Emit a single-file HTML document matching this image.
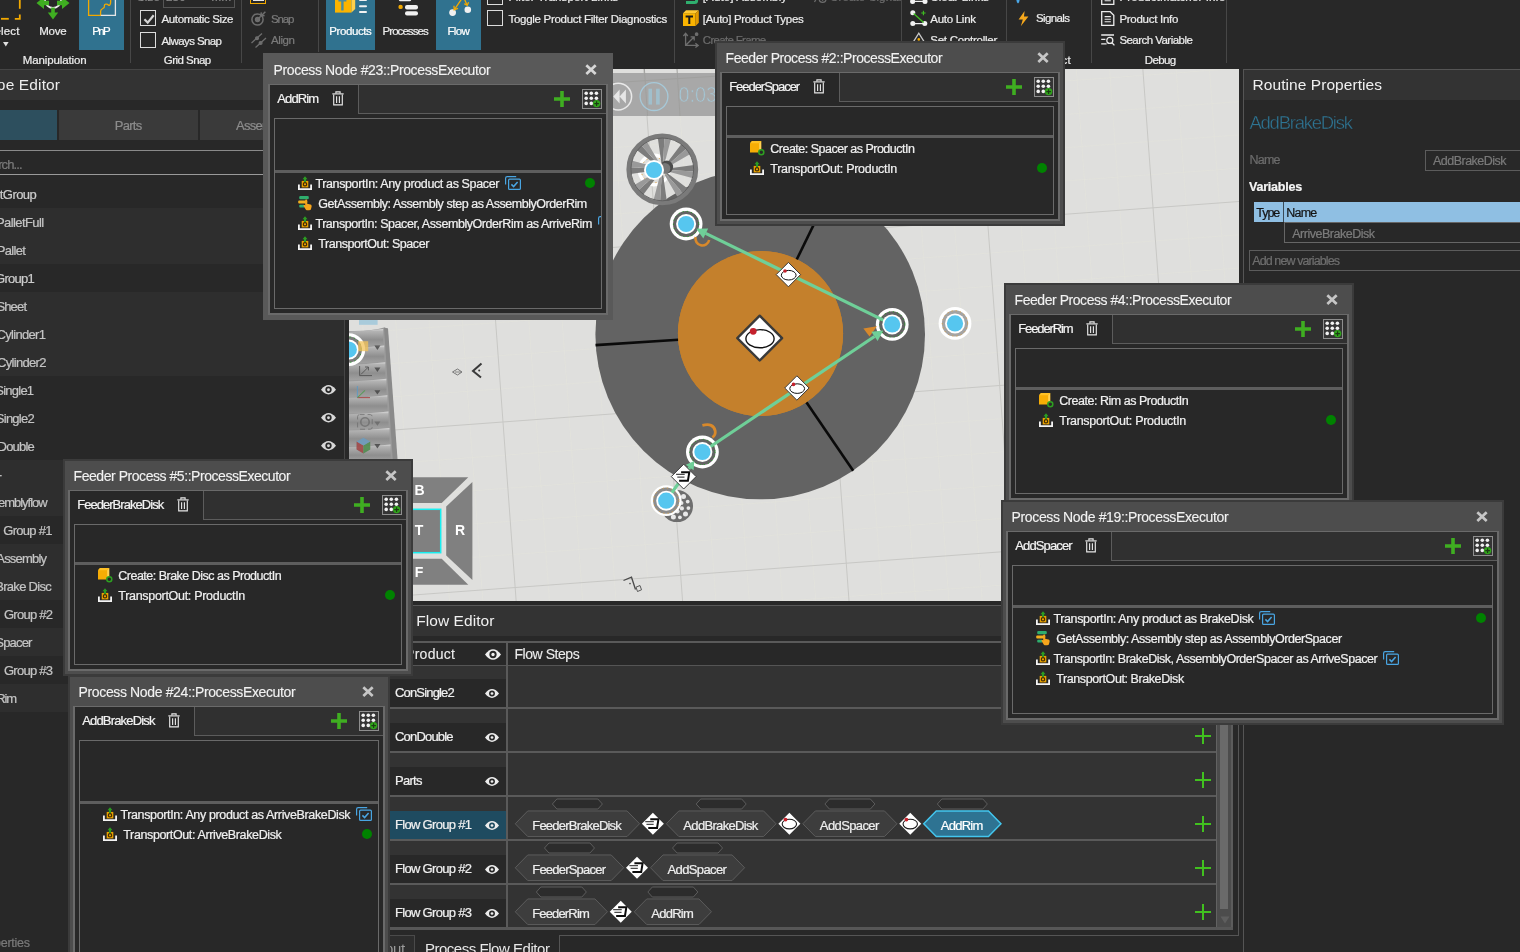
<!DOCTYPE html>
<html lang="en"><head><meta charset="utf-8"><title>Process Flow Editor</title>
<style>
html,body{margin:0;padding:0}
body{width:1520px;height:952px;overflow:hidden;background:#282828;position:relative;font-family:"Liberation Sans",sans-serif}
div,span.t,svg.i{position:absolute;box-sizing:border-box}
#app{left:0;top:0;width:1520px;height:952px;overflow:hidden;will-change:transform}
span.t{white-space:pre;line-height:1}
svg.i{overflow:visible}
.dlg{overflow:hidden}
</style></head>
<body>
<div id="app">
<!-- ribbon -->
<svg class="i" style="left:0px;top:0px;" width="22" height="21" viewBox="0 0 22 21"><g fill="none" stroke="#f2a900" stroke-width="1.8"><path d="M19.8 0V8.8"/><path d="M19.8 14.4V18.8H14.8"/><path d="M8.8 18.8H1"/></g></svg><span class="t" style="right:1500.46px;top:26px;font-size:11.5px;color:#ececec;letter-spacing:0.145px;-webkit-text-stroke:0.22px;">Select</span><svg class="i" style="left:2.5px;top:42px;" width="6" height="5" viewBox="0 0 6 5"><path d="M0 0H5.6L2.8 4.4z" fill="#e0e0e0"/></svg><svg class="i" style="left:36px;top:0px;" width="34" height="21" viewBox="0 0 34 21"><path d="M9 0A8 8 0 0 0 25 0" fill="none" stroke="#f0f0f0" stroke-width="1.8"/><g fill="#3fae21"><path d="M0.5 3L8 -3V0.8H13V5.2H8V9z"/><path d="M33.5 3L26 -3V0.8H21V5.2H26V9z"/><path d="M17 19.5L11.8 12.5H15.2V7.5H18.8V12.5H22.2z"/></g></svg><span class="t" style="left:39.25px;top:26px;font-size:11.5px;color:#ececec;letter-spacing:-0.207px;-webkit-text-stroke:0.22px;">Move</span><div style="left:79px;top:0px;width:45px;height:50px;background:#30728f;"></div><svg class="i" style="left:87px;top:0px;" width="30" height="17" viewBox="0 0 30 17"><g fill="none" stroke-width="1.3"><path d="M1.6 0V15.3H13.6V11.2C13.6 8 18 9 17.4 6.2 17 4 20 3.5 21.6 5.2 22.6 6 24 4.4 23.6 0" stroke="#f2a900"/><path d="M13.8 15.3H28.4V0" stroke="#e6e6e6"/></g></svg><span class="t" style="left:92.25px;top:26px;font-size:11.5px;color:#ffffff;letter-spacing:-1.619px;-webkit-text-stroke:0.22px;">PnP</span>
<span class="t" style="left:22.75px;top:55px;font-size:11.5px;color:#ececec;letter-spacing:-0.110px;-webkit-text-stroke:0.22px;">Manipulation</span><div style="left:130px;top:0px;width:1px;height:63px;background:#474747;"></div>
<div style="left:163px;top:-14px;width:72px;height:22px;border:1px solid #555555"></div><span class="t" style="left:137.00px;top:-8px;font-size:11.5px;color:#8a8a8a;letter-spacing:0.169px;-webkit-text-stroke:0.22px;">Size</span>
<span class="t" style="left:166.00px;top:-8px;font-size:11.5px;color:#8a8a8a;letter-spacing:0.217px;-webkit-text-stroke:0.22px;">250</span>
<span class="t" style="right:1288.57px;top:-8px;font-size:11.5px;color:#8a8a8a;letter-spacing:0.433px;-webkit-text-stroke:0.22px;">mm</span><div style="left:140px;top:10px;width:16px;height:16px;border:1px solid #dcdcdc"><svg class="i" style="left:1px;top:1px" width="14" height="14"><path d="M2.4 7.2l3.3 3.4 6-7.4" fill="none" stroke="#d4d4d4" stroke-width="2.2"/></svg></div>
<div style="left:140px;top:32px;width:16px;height:16px;border:1px solid #dcdcdc"></div><span class="t" style="left:161.50px;top:14px;font-size:11.5px;color:#ececec;letter-spacing:-0.362px;-webkit-text-stroke:0.22px;">Automatic Size</span>
<span class="t" style="left:161.50px;top:36px;font-size:11.5px;color:#ececec;letter-spacing:-0.598px;-webkit-text-stroke:0.22px;">Always Snap</span>
<span class="t" style="left:163.75px;top:55px;font-size:11.5px;color:#ececec;letter-spacing:-0.535px;-webkit-text-stroke:0.22px;">Grid Snap</span><div style="left:241px;top:0px;width:1px;height:63px;background:#474747;"></div>
<div style="left:250px;top:-12px;width:16px;height:16px;border:1.5px solid #f2a900"></div>
<div style="left:252.5px;top:-2px;width:11px;height:3px;background:#e8e8e8;"></div><svg class="i" style="left:251px;top:11px;" width="16" height="15" viewBox="0 0 16 15"><g fill="none" stroke="#6e6e6e" stroke-width="1.5"><circle cx="6.5" cy="8.5" r="5.6"/><circle cx="6.5" cy="8.5" r="2" fill="#6e6e6e"/><path d="M8 7L14.4 0.8M10.4 1.4L9.6 5.2 13.6 4.6"/></g></svg><span class="t" style="left:271.00px;top:14px;font-size:11.5px;color:#7a7a7a;letter-spacing:-1.120px;-webkit-text-stroke:0.22px;">Snap</span><svg class="i" style="left:251px;top:33px;" width="16" height="15" viewBox="0 0 16 15"><g fill="none" stroke="#6e6e6e" stroke-width="1.3"><path d="M0.5 10L11 0.5M4.5 14.5L15 5"/><circle cx="6" cy="5.2" r="1.4" fill="#6e6e6e"/><circle cx="9.6" cy="10" r="1.4" fill="#6e6e6e"/></g></svg><span class="t" style="left:271.00px;top:35px;font-size:11.5px;color:#7a7a7a;letter-spacing:-0.393px;-webkit-text-stroke:0.22px;">Align</span><div style="left:318px;top:0px;width:1px;height:52px;background:#474747;"></div>
<div style="left:326px;top:0px;width:49px;height:50px;background:#30728f;"></div><svg class="i" style="left:335px;top:0px;" width="34" height="14" viewBox="0 0 34 14"><path d="M0 0H16.5V12.6H0z" fill="#fbb400"/><path d="M16.5 0H20.2V9L16.5 12.6z" fill="#ffcf4a"/><path d="M3.4 0H11.4V1.6H8.6V10.6H6.2V1.6H3.4z" fill="#4a8ca0"/><g fill="#f2f2f2"><rect x="24" y="-1" width="8" height="2" rx="1"/><rect x="24" y="5.2" width="8" height="2" rx="1"/><rect x="24" y="11" width="8" height="2" rx="1"/></g></svg><span class="t" style="left:329.25px;top:26px;font-size:11.5px;color:#ffffff;letter-spacing:-0.412px;-webkit-text-stroke:0.22px;">Products</span><svg class="i" style="left:396px;top:0px;" width="24" height="17" viewBox="0 0 24 17"><g fill="#f0f0f0"><rect x="2.8" y="-2" width="12.4" height="3.2" rx="1.6"/><rect x="9" y="5" width="13" height="4.4" rx="2"/><rect x="9" y="11.2" width="13" height="4.4" rx="2"/></g><circle cx="4.6" cy="6.9" r="2.2" fill="#f2a900"/></svg><span class="t" style="left:382.50px;top:26px;font-size:11.5px;color:#ececec;letter-spacing:-0.936px;-webkit-text-stroke:0.22px;">Processes</span><div style="left:436px;top:0px;width:45px;height:50px;background:#30728f;"></div><svg class="i" style="left:447px;top:0px;" width="26" height="18" viewBox="0 0 26 18"><g fill="#f0f0f0"><circle cx="5.6" cy="12.6" r="3.4"/><circle cx="20.8" cy="9.8" r="3.3"/></g><g stroke="#f2a900" stroke-width="1.3" fill="none"><path d="M14.6 -1L7.4 9.6M7 5.8L7.2 9.8 11 8.4"/><path d="M17.4 -1L20 5M17.2 3.8L20.2 5.4 21.6 2.2"/></g></svg><span class="t" style="left:447.50px;top:26px;font-size:11.5px;color:#ffffff;letter-spacing:-0.694px;-webkit-text-stroke:0.22px;">Flow</span><div style="left:487px;top:-11px;width:16px;height:16px;border:1px solid #dcdcdc"></div>
<div style="left:487px;top:10px;width:16px;height:16px;border:1px solid #dcdcdc"></div><span class="t" style="left:508.50px;top:-8px;font-size:11.5px;color:#ececec;letter-spacing:0.116px;-webkit-text-stroke:0.22px;">Filter Transport Links</span>
<span class="t" style="left:508.50px;top:14px;font-size:11.5px;color:#ececec;letter-spacing:-0.292px;-webkit-text-stroke:0.22px;">Toggle Product Filter Diagnostics</span><div style="left:674px;top:0px;width:1px;height:63px;background:#474747;"></div><svg class="i" style="left:683px;top:-10px;" width="17" height="14" viewBox="0 0 17 14"><path d="M3 12.6H11.6Q13.6 12.6 13.6 10.6V2" fill="none" stroke="#2fae6e" stroke-width="3"/></svg><span class="t" style="left:702.75px;top:-8px;font-size:11.5px;color:#ececec;letter-spacing:0.133px;-webkit-text-stroke:0.22px;">[Auto] Assembly</span><svg class="i" style="left:683px;top:10px;" width="17" height="17" viewBox="0 0 17 17"><path d="M0 3.2H12.6V16H0z" fill="#fbb400"/><path d="M0 3.2L3 0.2H15.8L12.6 3.2z" fill="#ffc933"/><path d="M12.6 3.2L15.8 0.2V12.8L12.6 16z" fill="#e39a00"/><path d="M2.6 5.6H10V7.4H7.3V14H5.3V7.4H2.6z" fill="#1a1a1a"/></svg><span class="t" style="left:702.75px;top:14px;font-size:11.5px;color:#ececec;letter-spacing:-0.292px;-webkit-text-stroke:0.22px;">[Auto] Product Types</span><svg class="i" style="left:683px;top:32px;" width="17" height="17" viewBox="0 0 17 17"><g fill="none" stroke="#6e6e6e" stroke-width="1.3"><path d="M2.6 1.5V13.4H15M0.4 4L2.6 1.2 4.8 4M12.4 11.2L15.2 13.4 12.4 15.6M3 13L11 5M7.6 4.8H11.2V8.4"/><circle cx="13.6" cy="2.2" r="1.2" fill="#6e6e6e"/></g></svg><span class="t" style="left:702.75px;top:35px;font-size:11.5px;color:#6c6c6c;letter-spacing:-0.676px;-webkit-text-stroke:0.22px;">Create Frame</span><svg class="i" style="left:814px;top:-10px;" width="14" height="14" viewBox="0 0 14 14"><g fill="none" stroke="#6e6e6e" stroke-width="1.2"><path d="M0.5 12L6 2"/><circle cx="8.6" cy="9" r="3.4"/><path d="M8.6 7.2V10.8M6.8 9H10.4"/></g></svg><span class="t" style="left:830.00px;top:-8px;font-size:11.5px;color:#6c6c6c;letter-spacing:0.131px;-webkit-text-stroke:0.22px;">Create Signal</span><div style="left:901px;top:0px;width:1px;height:63px;background:#474747;"></div><svg class="i" style="left:910px;top:-10px;" width="18" height="14" viewBox="0 0 18 14"><g fill="#f2f2f2"><circle cx="2.6" cy="11.4" r="2.5"/><circle cx="15" cy="11.4" r="2.5"/></g><path d="M2.6 11.4H15" stroke="#f2f2f2" stroke-width="1.2"/><circle cx="12" cy="8.4" r="1" fill="#f2a900"/></svg><span class="t" style="left:930.25px;top:-8px;font-size:11.5px;color:#ececec;letter-spacing:0.130px;-webkit-text-stroke:0.22px;">Clear Links</span><svg class="i" style="left:910px;top:10px;" width="18" height="17" viewBox="0 0 18 17"><g fill="#f2f2f2"><circle cx="2.8" cy="2.8" r="2.5"/><circle cx="2.8" cy="13.6" r="2.5"/><circle cx="14.8" cy="13.6" r="2.5"/></g><path d="M2.8 13.6H14.8" stroke="#f2f2f2" stroke-width="1.2"/><path d="M3.6 3.6L13.6 12.6" stroke="#3fbf21" stroke-width="1.3"/><path d="M13.4 0.8V5.2M11.2 3H15.6" stroke="#3fbf21" stroke-width="1.1"/></svg><span class="t" style="left:930.25px;top:14px;font-size:11.5px;color:#ececec;letter-spacing:-0.275px;-webkit-text-stroke:0.22px;">Auto Link</span><svg class="i" style="left:910px;top:32px;" width="18" height="14" viewBox="0 0 18 14"><path d="M1 13.6L8.8 1.2 16.6 13.6" fill="none" stroke="#c8c8c8" stroke-width="1.3"/><circle cx="8.8" cy="7.4" r="1.3" fill="#f2a900"/><path d="M6.4 12.4Q8.8 8.4 11.2 12.4" fill="#e8e8e8"/></svg><span class="t" style="left:930.25px;top:35px;font-size:11.5px;color:#ececec;letter-spacing:-0.255px;-webkit-text-stroke:0.22px;">Set Controller</span><div style="left:1006px;top:0px;width:1px;height:63px;background:#474747;"></div><svg class="i" style="left:1015px;top:-4px;" width="6" height="8" viewBox="0 0 6 8"><path d="M3 0Q6 5 3 7.6 0 5 3 0z" fill="#4aa8e8"/></svg><svg class="i" style="left:1018px;top:10.5px;" width="11" height="15.5" viewBox="0 0 11 15.5"><path d="M6.6 0L0.6 8.6H4.8L2.8 15.2 10.4 5.6H6z" fill="#f6a81c"/></svg><span class="t" style="left:1036.00px;top:13px;font-size:11.5px;color:#ececec;letter-spacing:-0.620px;-webkit-text-stroke:0.22px;">Signals</span>
<span class="t" style="right:449.24px;top:55px;font-size:11.5px;color:#ececec;letter-spacing:0.161px;-webkit-text-stroke:0.22px;">Connect</span><div style="left:1091px;top:0px;width:1px;height:63px;background:#474747;"></div><svg class="i" style="left:1101px;top:-10.5px;" width="14" height="15" viewBox="0 0 14 15"><path d="M0.7 0.7H9.2L12.8 4.2V14.3H0.7z" fill="none" stroke="#ececec" stroke-width="1.3"/><path d="M3.6 5.6H9.8M3.6 8.2H9.8M3.6 10.8H9.8" stroke="#ececec" stroke-width="1.1"/></svg><span class="t" style="left:1119.40px;top:-8px;font-size:11.5px;color:#ececec;letter-spacing:0.130px;-webkit-text-stroke:0.22px;">ProductMatcher Info</span><svg class="i" style="left:1101px;top:10.5px;" width="14" height="15" viewBox="0 0 14 15"><path d="M0.7 0.7H9.2L12.8 4.2V14.3H0.7z" fill="none" stroke="#ececec" stroke-width="1.3"/><path d="M3.6 5.6H9.8M3.6 8.2H9.8M3.6 10.8H9.8" stroke="#ececec" stroke-width="1.1"/></svg><span class="t" style="left:1119.40px;top:14px;font-size:11.5px;color:#ececec;letter-spacing:-0.274px;-webkit-text-stroke:0.22px;">Product Info</span><svg class="i" style="left:1101px;top:34px;" width="14" height="12" viewBox="0 0 14 12"><g fill="none" stroke="#ececec" stroke-width="1.3"><path d="M0.2 1H13M0.2 5.4H4.4M0.2 9.8H5.6"/><circle cx="8.8" cy="6.4" r="3"/><path d="M11 8.8L13.4 11.4"/></g></svg><span class="t" style="left:1119.40px;top:35px;font-size:11.5px;color:#ececec;letter-spacing:-0.541px;-webkit-text-stroke:0.22px;">Search Variable</span>
<span class="t" style="left:1144.75px;top:55px;font-size:11.5px;color:#ececec;letter-spacing:-0.597px;-webkit-text-stroke:0.22px;">Debug</span><div style="left:1226px;top:0px;width:1px;height:63px;background:#474747;"></div>
<!-- left panel -->
<div style="left:0px;top:69px;width:349px;height:1px;background:#454545;"></div>
<div style="left:0px;top:70px;width:344px;height:30px;background:#333333;"></div><span class="t" style="right:1459.86px;top:77px;font-size:15.5px;color:#ededed;letter-spacing:0.136px;">Product Type Editor</span><div style="left:344px;top:70px;width:1px;height:882px;background:#454545;"></div>
<div style="left:0px;top:110px;width:57px;height:30px;background:#2d4f5e;"></div>
<div style="left:59px;top:110px;width:139px;height:30px;background:#3a3a3a;"></div><span class="t" style="left:114.75px;top:119px;font-size:13px;color:#8c8c8c;letter-spacing:-0.711px;-webkit-text-stroke:0.22px;">Parts</span><div style="left:200px;top:110px;width:139px;height:30px;background:#3a3a3a;"></div><span class="t" style="left:236.00px;top:119px;font-size:13px;color:#8c8c8c;letter-spacing:-0.704px;-webkit-text-stroke:0.22px;">Assemblies</span><div style="left:0px;top:150px;width:340px;height:1px;background:#8a8a8a;"></div>
<div style="left:0px;top:174px;width:340px;height:1px;background:#9a9a9a;"></div><span class="t" style="right:1498.42px;top:158px;font-size:13px;color:#7a7a7a;letter-spacing:-0.920px;-webkit-text-stroke:0.22px;">Search...</span>
<span class="t" style="right:1483.74px;top:188px;font-size:13px;color:#cdcdcd;letter-spacing:-0.541px;-webkit-text-stroke:0.22px;">DefaultGroup</span><div style="left:0px;top:208px;width:344px;height:28px;background:#2e2e2e;"></div><span class="t" style="right:1476.49px;top:216px;font-size:13px;color:#c4c4c4;letter-spacing:-0.594px;-webkit-text-stroke:0.22px;">PalletFull</span><div style="left:0px;top:236px;width:344px;height:28px;background:#2e2e2e;"></div><span class="t" style="right:1494.75px;top:244px;font-size:13px;color:#c4c4c4;letter-spacing:-0.650px;-webkit-text-stroke:0.22px;">Pallet</span>
<span class="t" style="right:1486.03px;top:272px;font-size:13px;color:#cdcdcd;letter-spacing:-0.735px;-webkit-text-stroke:0.22px;">ProductGroup1</span><div style="left:0px;top:292px;width:344px;height:28px;background:#2e2e2e;"></div><span class="t" style="right:1493.85px;top:300px;font-size:13px;color:#c4c4c4;letter-spacing:-0.849px;-webkit-text-stroke:0.22px;">Sheet</span><div style="left:0px;top:320px;width:344px;height:28px;background:#2e2e2e;"></div><span class="t" style="right:1474.79px;top:328px;font-size:13px;color:#c4c4c4;letter-spacing:-0.686px;-webkit-text-stroke:0.22px;">Cylinder1</span><div style="left:0px;top:348px;width:344px;height:28px;background:#2e2e2e;"></div><span class="t" style="right:1474.19px;top:356px;font-size:13px;color:#c4c4c4;letter-spacing:-0.686px;-webkit-text-stroke:0.22px;">Cylinder2</span>
<span class="t" style="right:1486.65px;top:384px;font-size:13px;color:#c4c4c4;letter-spacing:-0.747px;-webkit-text-stroke:0.22px;">ConSingle1</span>
<span class="t" style="right:1486.05px;top:412px;font-size:13px;color:#c4c4c4;letter-spacing:-0.747px;-webkit-text-stroke:0.22px;">ConSingle2</span>
<span class="t" style="right:1486.11px;top:440px;font-size:13px;color:#c4c4c4;letter-spacing:-0.813px;-webkit-text-stroke:0.22px;">ConDouble</span><div style="left:0px;top:460px;width:344px;height:28px;background:#2e2e2e;"></div><span class="t" style="right:1518.00px;top:468px;font-size:13px;color:#c4c4c4;-webkit-text-stroke:0.22px;">-</span><div style="left:0px;top:488px;width:344px;height:28px;background:#2e2e2e;"></div><span class="t" style="right:1473.42px;top:496px;font-size:13px;color:#c4c4c4;letter-spacing:-1.023px;-webkit-text-stroke:0.22px;">Assemblyflow</span>
<span class="t" style="right:1468.33px;top:524px;font-size:13px;color:#c4c4c4;letter-spacing:-0.735px;-webkit-text-stroke:0.22px;">Flow Group #1</span><div style="left:0px;top:544px;width:344px;height:28px;background:#2e2e2e;"></div><span class="t" style="right:1473.80px;top:552px;font-size:13px;color:#c4c4c4;letter-spacing:-0.805px;-webkit-text-stroke:0.22px;">Assembly</span><div style="left:0px;top:572px;width:344px;height:28px;background:#2e2e2e;"></div><span class="t" style="right:1468.90px;top:580px;font-size:13px;color:#c4c4c4;letter-spacing:-0.698px;-webkit-text-stroke:0.22px;">Brake Disc</span>
<span class="t" style="right:1467.73px;top:608px;font-size:13px;color:#c4c4c4;letter-spacing:-0.735px;-webkit-text-stroke:0.22px;">Flow Group #2</span><div style="left:0px;top:628px;width:344px;height:28px;background:#2e2e2e;"></div><span class="t" style="right:1488.42px;top:636px;font-size:13px;color:#c4c4c4;letter-spacing:-0.824px;-webkit-text-stroke:0.22px;">Spacer</span>
<span class="t" style="right:1467.73px;top:664px;font-size:13px;color:#c4c4c4;letter-spacing:-0.735px;-webkit-text-stroke:0.22px;">Flow Group #3</span><div style="left:0px;top:684px;width:344px;height:28px;background:#2e2e2e;"></div><span class="t" style="right:1504.16px;top:692px;font-size:13px;color:#c4c4c4;letter-spacing:-1.155px;-webkit-text-stroke:0.22px;">Rim</span><svg class="i" style="left:321.1px;top:385.25px;" width="15" height="9.5" viewBox="0 0 15 9.5"><path d="M0 4.75Q7.5 -4.5125 15 4.75Q7.5 14.0125 0 4.75z" fill="#d8d8d8"/><circle cx="7.5" cy="4.75" r="3.14" fill="#282828"/><circle cx="7.5" cy="4.75" r="1.43" fill="#d8d8d8"/></svg><svg class="i" style="left:321.1px;top:413.25px;" width="15" height="9.5" viewBox="0 0 15 9.5"><path d="M0 4.75Q7.5 -4.5125 15 4.75Q7.5 14.0125 0 4.75z" fill="#d8d8d8"/><circle cx="7.5" cy="4.75" r="3.14" fill="#282828"/><circle cx="7.5" cy="4.75" r="1.43" fill="#d8d8d8"/></svg><svg class="i" style="left:321.1px;top:441.25px;" width="15" height="9.5" viewBox="0 0 15 9.5"><path d="M0 4.75Q7.5 -4.5125 15 4.75Q7.5 14.0125 0 4.75z" fill="#d8d8d8"/><circle cx="7.5" cy="4.75" r="3.14" fill="#282828"/><circle cx="7.5" cy="4.75" r="1.43" fill="#d8d8d8"/></svg><span class="t" style="right:1490.25px;top:937px;font-size:12.5px;color:#7a7a7a;letter-spacing:-0.253px;-webkit-text-stroke:0.22px;">Properties</span>
<!-- 3d viewport -->
<svg class="i" style="left:349px;top:69px;overflow:hidden" width="890" height="532" viewBox="349 69 890 532"><rect x="349" y="69" width="890" height="532" fill="#dfdfdd"/><path d="M144.2 -383.9L265.8 1271.7M177.3 -386.3L298.9 1269.2M210.4 -388.8L332.0 1266.8M243.5 -391.2L365.1 1264.4M309.8 -396.0L431.3 1259.5M342.9 -398.5L464.5 1257.1M376.0 -400.9L497.6 1254.6M409.1 -403.3L530.7 1252.2M475.3 -408.2L596.9 1247.3M508.4 -410.6L630.0 1244.9M541.5 -413.1L663.1 1242.5M574.7 -415.5L696.2 1240.0M640.9 -420.4L762.5 1235.2M674.0 -422.8L795.6 1232.8M707.1 -425.2L828.7 1230.3M740.2 -427.7L861.8 1227.9M806.4 -432.5L928.0 1223.0M839.5 -434.9L961.1 1220.6M872.7 -437.4L994.2 1218.2M905.8 -439.8L1027.3 1215.7M972.0 -444.7L1093.6 1210.9M1005.1 -447.1L1126.7 1208.4M1038.2 -449.5L1159.8 1206.0M1071.3 -452.0L1192.9 1203.6M1137.5 -456.8L1259.1 1198.7M1170.7 -459.3L1292.2 1196.3M1203.8 -461.7L1325.3 1193.8M1236.9 -464.1L1358.4 1191.4M1303.1 -469.0L1424.7 1186.6M1336.2 -471.4L1457.8 1184.1M1369.3 -473.9L1490.9 1181.7M1402.4 -476.3L1524.0 1179.3M1468.6 -481.1L1590.2 1174.4M1501.8 -483.6L1623.3 1172.0M1534.9 -486.0L1656.4 1169.5M1568.0 -488.4L1689.6 1167.1M1634.2 -493.3L1755.8 1162.2M1667.3 -495.7L1788.9 1159.8M1700.4 -498.2L1822.0 1157.4M1733.5 -500.6L1855.1 1154.9M-358.8 19.2L1793.4 -138.8M-356.4 52.3L1795.8 -105.7M-353.9 85.5L1798.3 -72.6M-351.5 118.6L1800.7 -39.5M-346.7 184.8L1805.6 26.7M-344.2 217.9L1808.0 59.9M-341.8 251.0L1810.4 93.0M-339.4 284.1L1812.8 126.1M-334.5 350.3L1817.7 192.3M-332.1 383.5L1820.1 225.4M-329.6 416.6L1822.6 258.5M-327.2 449.7L1825.0 291.6M-322.3 515.9L1829.9 357.9M-319.9 549.0L1832.3 391.0M-317.5 582.1L1834.7 424.1M-315.0 615.2L1837.2 457.2M-310.2 681.5L1842.0 523.4M-307.8 714.6L1844.5 556.5M-305.3 747.7L1846.9 589.6M-302.9 780.8L1849.3 622.7M-298.0 847.0L1854.2 689.0M-295.6 880.1L1856.6 722.1M-293.2 913.2L1859.0 755.2M-290.7 946.3L1861.5 788.3" stroke="#e2e2dc" stroke-width="0.8" fill="none"/><path d="M111.1 -381.5L232.7 1274.1M276.7 -393.6L398.2 1261.9M442.2 -405.8L563.8 1249.8M607.8 -417.9L729.3 1237.6M773.3 -430.1L894.9 1225.5M938.9 -442.2L1060.5 1213.3M1104.4 -454.4L1226.0 1201.1M1270.0 -466.6L1391.6 1189.0M1435.5 -478.7L1557.1 1176.8M1601.1 -490.9L1722.7 1164.7M-361.2 -13.9L1791.0 -171.9M-349.1 151.7L1803.1 -6.4M-336.9 317.2L1815.3 159.2M-324.8 482.8L1827.4 324.7M-312.6 648.3L1839.6 490.3M-300.5 813.9L1851.7 655.8" stroke="#c8c8c5" stroke-width="1" fill="none"/><rect x="480" y="73" width="560" height="43" fill="#a8a8a8"/><path d="M613 82.7L716 76.2M644.4 69L647.6 116M677 69L680 116" stroke="#a0a09e" stroke-width="1" fill="none"/><circle cx="618.2" cy="96.6" r="13.4" fill="none" stroke="#e9e9e9" stroke-width="1.5"/><path d="M613.3 96.6L619.6 89.6V103.4zM619.6 96.6L625.9 89.6V103.4z" fill="#e6e6e6"/><circle cx="654" cy="96.6" r="13.9" fill="none" stroke="#a6c9d9" stroke-width="1.3"/><rect x="648.5" y="88.7" width="3.5" height="15.9" fill="#a0bfcc"/><rect x="656.1" y="88.7" width="3.6" height="15.9" fill="#a0bfcc"/><text x="678.4" y="102" font-family="Liberation Sans, sans-serif" font-size="22.4" fill="#a3c8d8" stroke="#a8a8a8" stroke-width="0.7" textLength="38.6" lengthAdjust="spacingAndGlyphs">0:03</text><circle cx="760.2" cy="334.5" r="164.8" fill="#636363"/><circle cx="760.5" cy="333.5" r="82.6" fill="#c4802c"/><line x1="678.4" y1="339.8" x2="595.5" y2="345.1" stroke="#0a0a0a" stroke-width="2.6"/><line x1="806.4" y1="402.2" x2="853.2" y2="470.8" stroke="#0a0a0a" stroke-width="2.6"/><line x1="796.1" y1="260.8" x2="832.5" y2="186.2" stroke="#0a0a0a" stroke-width="2.6"/><circle cx="760.5" cy="333.5" r="82.6" fill="#c4802c"/><circle cx="654" cy="170" r="16.4" fill="#ffffff"/><circle cx="654" cy="170" r="13.1" fill="#dfdfdd"/><circle cx="654" cy="170" r="12.7" fill="none" stroke="#e0a040" stroke-width="0.9" stroke-dasharray="1.2 3.1"/><path d="M668.2 168.5L694.0 164.9L694.2 171.6L668.3 170.1zM667.2 172.9L687.9 188.7L683.3 193.6L666.0 174.1zM663.2 175.3L666.8 201.1L660.1 201.3L661.6 175.4zM658.8 174.3L643.0 195.0L638.1 190.4L657.6 173.1zM656.4 170.3L630.6 173.9L630.4 167.2L656.3 168.7zM657.4 165.9L636.7 150.1L641.3 145.2L658.6 164.7zM661.4 163.5L657.8 137.7L664.5 137.5L663.0 163.4zM665.8 164.5L681.6 143.8L686.5 148.4L667.0 165.7z" fill="#7c7c7c"/><path d="M668.3 170.1L694.2 171.6L693.1 178.2L667.9 171.6zM666.0 174.1L683.3 193.6L677.8 197.4L664.7 174.9zM661.6 175.4L660.1 201.3L653.5 200.2L660.1 175.0zM657.6 173.1L638.1 190.4L634.3 184.9L656.8 171.8zM656.3 168.7L630.4 167.2L631.5 160.6L656.7 167.2zM658.6 164.7L641.3 145.2L646.8 141.4L659.9 163.9zM663.0 163.4L664.5 137.5L671.1 138.6L664.5 163.8zM667.0 165.7L686.5 148.4L690.3 153.9L667.8 167.0z" fill="#999999"/><circle cx="662.3" cy="169.4" r="33.7" fill="none" stroke="#7a7a7a" stroke-width="4.4"/><circle cx="662.3" cy="169.4" r="31.4" fill="none" stroke="#5c5c5c" stroke-width="0.9"/><circle cx="666.6999999999999" cy="167.0" r="6.4" fill="#4c4c4c"/><circle cx="664.9" cy="168.4" r="5.4" fill="#777777"/><circle cx="654" cy="170" r="10.0" fill="#ffffff"/><circle cx="654" cy="170" r="8.1" fill="#56c6ef"/><circle cx="677" cy="506.1" r="16" fill="#6e6e6e"/><circle cx="688.4" cy="508.1" r="1.9" fill="#e9e9e9"/><circle cx="685.5" cy="514.0" r="2.5" fill="#e9e9e9"/><circle cx="679.9" cy="517.3" r="1.9" fill="#e9e9e9"/><circle cx="673.4" cy="517.1" r="2.5" fill="#e9e9e9"/><circle cx="668.0" cy="513.4" r="1.9" fill="#e9e9e9"/><circle cx="665.5" cy="507.4" r="2.5" fill="#e9e9e9"/><circle cx="666.6" cy="501.0" r="1.9" fill="#e9e9e9"/><circle cx="671.0" cy="496.2" r="2.5" fill="#e9e9e9"/><circle cx="677.3" cy="494.5" r="1.9" fill="#e9e9e9"/><circle cx="683.5" cy="496.5" r="2.5" fill="#e9e9e9"/><circle cx="687.7" cy="501.6" r="1.9" fill="#e9e9e9"/><circle cx="681.9" cy="508.4" r="2.1" fill="#e9e9e9"/><circle cx="677.5" cy="511.5" r="2.1" fill="#e9e9e9"/><circle cx="672.6" cy="509.2" r="2.1" fill="#e9e9e9"/><circle cx="672.1" cy="503.8" r="2.1" fill="#e9e9e9"/><circle cx="676.5" cy="500.7" r="2.1" fill="#e9e9e9"/><circle cx="681.4" cy="503.0" r="2.1" fill="#e9e9e9"/><circle cx="686.1" cy="224" r="16.4" fill="#ffffff"/><circle cx="686.1" cy="224" r="13.1" fill="#636363"/><circle cx="686.1" cy="224" r="12.7" fill="none" stroke="#1fa31f" stroke-width="0.9" stroke-dasharray="1.2 3.1"/><circle cx="892.2" cy="324.4" r="16.4" fill="#ffffff"/><circle cx="892.2" cy="324.4" r="13.1" fill="#636363"/><circle cx="892.2" cy="324.4" r="12.7" fill="none" stroke="#1fa31f" stroke-width="0.9" stroke-dasharray="1.2 3.1"/><circle cx="702.4" cy="452" r="16.4" fill="#ffffff"/><circle cx="702.4" cy="452" r="13.1" fill="#636363"/><circle cx="702.4" cy="452" r="12.7" fill="none" stroke="#1fa31f" stroke-width="0.9" stroke-dasharray="1.2 3.1"/><circle cx="955" cy="323.4" r="16.4" fill="#ffffff"/><circle cx="955" cy="323.4" r="13.1" fill="#a4a4a4"/><circle cx="955" cy="323.4" r="12.7" fill="none" stroke="#e0a040" stroke-width="0.9" stroke-dasharray="1.2 3.1"/><circle cx="666.2" cy="500.7" r="15.4" fill="#ffffff"/><circle cx="666.2" cy="500.7" r="13.1" fill="#8c8c8c"/><circle cx="666.2" cy="500.7" r="12.7" fill="none" stroke="#e0a040" stroke-width="0.9" stroke-dasharray="1.2 3.1"/><path d="M695.6 237A6.8 6.8 0 1 0 709.2 240" fill="none" stroke="#d8892b" stroke-width="2.5"/><path d="M702.4 425.4Q713.4 422.6 715.2 431Q715.8 435.2 712.4 437.4" fill="none" stroke="#d8892b" stroke-width="2.8"/><path d="M863.4 328.4L877 326.2 869.5 336.4z" fill="#d8892b"/><line x1="892.0" y1="324.4" x2="705.7" y2="233.4" stroke="#6fcf98" stroke-width="3.2"/><polygon points="696.3,228.8 708.2,228.4 703.3,238.4" fill="#6fcf98"/><line x1="702.4" y1="452.0" x2="874.5" y2="336.5" stroke="#6fcf98" stroke-width="3.2"/><polygon points="883.2,330.6 877.6,341.1 871.4,331.8" fill="#6fcf98"/><line x1="666.2" y1="500.7" x2="689.7" y2="467.5" stroke="#6fcf98" stroke-width="3.2"/><polygon points="694.3,461.0 693.6,470.3 685.8,464.8" fill="#6fcf98"/><circle cx="686.1" cy="224" r="10.0" fill="#ffffff"/><circle cx="686.1" cy="224" r="8.1" fill="#56c6ef"/><circle cx="892.2" cy="324.4" r="10.0" fill="#ffffff"/><circle cx="892.2" cy="324.4" r="8.1" fill="#56c6ef"/><circle cx="702.4" cy="452" r="10.0" fill="#ffffff"/><circle cx="702.4" cy="452" r="8.1" fill="#56c6ef"/><circle cx="955" cy="323.4" r="10.0" fill="#ffffff"/><circle cx="955" cy="323.4" r="8.1" fill="#56c6ef"/><circle cx="666.2" cy="500.7" r="10.0" fill="#ffffff"/><circle cx="666.2" cy="500.7" r="8.1" fill="#56c6ef"/><polygon points="776.1999999999999,274.6 788.4,262.40000000000003 800.6,274.6 788.4,286.8" fill="#ffffff" stroke="#3a3a3a" stroke-width="1.0" stroke-linejoin="round"/><ellipse cx="788.6999999999999" cy="275.20000000000005" rx="7.4" ry="4.8" fill="none" stroke="#111" stroke-width="1.00"/><circle cx="785.0" cy="271.0" r="1.8" fill="#c4202c"/><polygon points="784.6999999999999,388 796.9,375.8 809.1,388 796.9,400.2" fill="#ffffff" stroke="#3a3a3a" stroke-width="1.0" stroke-linejoin="round"/><ellipse cx="797.1999999999999" cy="388.6" rx="7.4" ry="4.8" fill="none" stroke="#111" stroke-width="1.00"/><circle cx="793.5" cy="384.4" r="1.8" fill="#c4202c"/><polygon points="737.3000000000001,338.1 759.7,315.70000000000005 782.1,338.1 759.7,360.5" fill="#ffffff" stroke="#3a3a3a" stroke-width="2.4" stroke-linejoin="round"/><ellipse cx="760.0" cy="338.70000000000005" rx="14.1" ry="9.1" fill="none" stroke="#111" stroke-width="1.38"/><circle cx="753.2" cy="331.3" r="3.4" fill="#c4202c"/><polygon points="671.3000000000001,476.6 683.7,464.20000000000005 696.1,476.6 683.7,489.0" fill="#ffffff" stroke="#3a3a3a" stroke-width="1.0" stroke-linejoin="round"/><g fill="none" stroke="#0c0c0c" stroke-width="2"><path d="M681.1 472.20000000000005H689.3000000000001L687.9000000000001 480.8H679.1"/></g><path d="M676.1 474.40000000000003H684.7M677.3000000000001 477.20000000000005H684.5" stroke="#4a4a4a" stroke-width="1.2" fill="none"/><path d="M481.5 363.5L473 371 481 377.6" fill="none" stroke="#3a3a3a" stroke-width="2"/><circle cx="479.2" cy="370.6" r="1" fill="#3a3a3a"/><path d="M452.5 372L457.5 369 462 372 457.5 375z" fill="none" stroke="#6a6a6a" stroke-width="0.9"/><path d="M455 372H461" stroke="#6a6a6a" stroke-width="0.8"/><path d="M623.5 580.5L631.5 577.2 635.5 589.5" fill="none" stroke="#4a4a4a" stroke-width="1.3"/><path d="M636 587.2L640 585.5 641.5 589.8 637.5 591.5z" fill="none" stroke="#4a4a4a" stroke-width="0.9"/><circle cx="630" cy="583.6" r="0.8" fill="#4a4a4a"/><defs><linearGradient id="rol" x1="0" y1="0" x2="0" y2="1"><stop offset="0" stop-color="#dcdcdc"/><stop offset="0.12" stop-color="#b4b4b4"/><stop offset="0.6" stop-color="#8e8e8e"/><stop offset="1" stop-color="#a2a2a2"/></linearGradient></defs><path d="M349 331Q372 331.5 384 327.6L387.6 328.4 396.4 460H349z" fill="#9b9b9b"/><path d="M349 331.6Q366 331.2 383.2 329V344.2Q366 346.6 349 347z" fill="url(#rol)"/><path d="M349 348.20000000000005Q366 347.8 384.3 345.6V360.8Q366 363.20000000000005 349 363.6z" fill="url(#rol)"/><path d="M349 364.8Q366 364.4 385.3 362.2V377.4Q366 379.8 349 380.2z" fill="url(#rol)"/><path d="M349 381.40000000000003Q366 381.0 386.4 378.8V394.0Q366 396.40000000000003 349 396.8z" fill="url(#rol)"/><path d="M349 397.8Q366 397.4 387.4 395.2V410.4Q366 412.8 349 413.2z" fill="url(#rol)"/><path d="M349 414.20000000000005Q366 413.8 388.5 411.6V426.8Q366 429.20000000000005 349 429.6z" fill="url(#rol)"/><path d="M349 430.6Q366 430.2 389.5 428V443.2Q366 445.6 349 446z" fill="url(#rol)"/><path d="M349 447.0Q366 446.59999999999997 390.6 444.4V459.59999999999997Q366 462.0 349 462.4z" fill="url(#rol)"/><path d="M384 327.6L388 328.6 397.6 460H392.8z" fill="#8a8a8a"/><rect x="359" y="319.6" width="18.6" height="5.2" fill="#a9cbdb"/><circle cx="348.8" cy="349.6" r="16.4" fill="#ffffff"/><circle cx="348.8" cy="349.6" r="13.1" fill="#7c7c7c"/><circle cx="348.8" cy="349.6" r="12.7" fill="none" stroke="#1fa31f" stroke-width="0.9" stroke-dasharray="1.2 3.1"/><circle cx="348.8" cy="349.6" r="10.0" fill="#ffffff"/><circle cx="348.8" cy="349.6" r="8.1" fill="#56c6ef"/><g fill="#3c3c3c" opacity="0.75"><path d="M374.4 345.6H380.4L377.4 350z"/><path d="M374.4 367.6H380.4L377.4 372z"/><path d="M374.4 390.2H380.4L377.4 394.6z"/><path d="M374.4 421.4H380.4L377.4 425.8z" opacity="0.5"/><path d="M374.4 444H380.4L377.4 448.4z"/></g><path d="M358.2 341.2H368.2V351.2H358.2z" fill="#f3c257" opacity="0.75"/><g fill="none" stroke="#4a4a4a" stroke-width="1" opacity="0.8"><path d="M359.6 366V375.6H372M361 374.4L368 367.4M365 367H368.4V370.4"/></g><g fill="none" stroke-width="1.1" opacity="0.8"><path d="M357.4 386V397.6" stroke="#5a9ac8"/><path d="M357.4 397.6H370" stroke="#a83a3a"/><path d="M357.4 397.6L365 390.4" stroke="#4c9c4c"/></g><g fill="none" stroke="#6a6a6a" opacity="0.7"><rect x="357.6" y="414.6" width="14.6" height="14.6" rx="2" stroke-dasharray="5 3" stroke-width="1"/><circle cx="365" cy="422" r="4.2" stroke-width="1.6"/></g><g opacity="0.85"><path d="M356.6 441.6L363.4 437.8 370.2 441.6V449.6L363.4 453.6 356.6 449.6z" fill="#8a8a8a"/><path d="M356.6 441.6L363.4 445.4V453.6L356.6 449.6z" fill="#a04444"/><path d="M370.2 441.6L363.4 445.4V453.6L370.2 449.6z" fill="#4c8c4c"/><path d="M356.6 441.6L363.4 437.8 370.2 441.6 363.4 445.4z" fill="#6c9cc0"/></g><g fill="#808080"><path d="M400 477.2H468.3L441.7 503H400z"/><path d="M400 558.8H441.7L468.3 584.8H400z"/><path d="M446.2 506.6L472.4 482V580L446.2 555.4z"/></g><rect x="400" y="509.3" width="40.7" height="43.4" fill="#808080" stroke="#19eef0" stroke-width="1.5"/><text x="414.4" y="495.4" font-family="Liberation Sans, sans-serif" font-size="14" font-weight="700" fill="#ffffff">B</text><text x="414.8" y="535.4" font-family="Liberation Sans, sans-serif" font-size="14" font-weight="700" fill="#ffffff">T</text><text x="454.9" y="535.4" font-family="Liberation Sans, sans-serif" font-size="14" font-weight="700" fill="#ffffff">R</text><text x="414.8" y="577.3" font-family="Liberation Sans, sans-serif" font-size="14" font-weight="700" fill="#ffffff">F</text></svg>
<!-- flow editor -->
<div style="left:349px;top:601px;width:895px;height:351px;background:#282828;"></div>
<div style="left:390px;top:605px;width:849px;height:1px;background:#585858;"></div>
<div style="left:390px;top:606px;width:849px;height:30px;background:#333333;"></div><span class="t" style="left:416.25px;top:613px;font-size:15.5px;color:#f0f0f0;letter-spacing:0.057px;">Flow Editor</span><div style="left:1238px;top:605px;width:1px;height:331px;background:#555555;"></div>
<div style="left:390px;top:641px;width:843px;height:2px;background:#5a5a5a;"></div>
<div style="left:390px;top:643px;width:116px;height:22px;background:#282828;"></div>
<div style="left:508px;top:643px;width:725px;height:22px;background:#282828;"></div>
<div style="left:390px;top:665px;width:826px;height:1px;background:#555555;"></div><span class="t" style="right:1064.71px;top:647px;font-size:14px;color:#ececec;letter-spacing:0.292px;-webkit-text-stroke:0.12px;">Product</span><svg class="i" style="left:485.0px;top:648.5px;" width="16" height="11" viewBox="0 0 16 11"><path d="M0 5.5Q8.0 -5.225 16 5.5Q8.0 16.225 0 5.5z" fill="#f0f0f0"/><circle cx="8.0" cy="5.5" r="3.63" fill="#282828"/><circle cx="8.0" cy="5.5" r="1.65" fill="#f0f0f0"/></svg><span class="t" style="left:514.40px;top:647px;font-size:14px;color:#ececec;letter-spacing:-0.440px;-webkit-text-stroke:0.12px;">Flow Steps</span><div style="left:390px;top:666px;width:826px;height:264px;background:#333333;"></div>
<div style="left:506px;top:643px;width:2px;height:285px;background:#5a5a5a;"></div>
<div style="left:390px;top:679px;width:116px;height:28px;background:#282828;"></div>
<div style="left:390px;top:707px;width:826px;height:2px;background:#5a5a5a;"></div><span class="t" style="left:395.00px;top:686px;font-size:13px;color:#f0f0f0;letter-spacing:-0.830px;-webkit-text-stroke:0.22px;">ConSingle2</span><svg class="i" style="left:485.0px;top:688.5px;" width="14" height="9" viewBox="0 0 14 9"><path d="M0 4.5Q7.0 -4.2749999999999995 14 4.5Q7.0 13.274999999999999 0 4.5z" fill="#ececec"/><circle cx="7.0" cy="4.5" r="2.97" fill="#282828"/><circle cx="7.0" cy="4.5" r="1.35" fill="#ececec"/></svg><div style="left:390px;top:723px;width:116px;height:28px;background:#282828;"></div>
<div style="left:390px;top:751px;width:826px;height:2px;background:#5a5a5a;"></div><span class="t" style="left:395.00px;top:730px;font-size:13px;color:#f0f0f0;letter-spacing:-0.818px;-webkit-text-stroke:0.22px;">ConDouble</span><svg class="i" style="left:485.0px;top:732.5px;" width="14" height="9" viewBox="0 0 14 9"><path d="M0 4.5Q7.0 -4.2749999999999995 14 4.5Q7.0 13.274999999999999 0 4.5z" fill="#ececec"/><circle cx="7.0" cy="4.5" r="2.97" fill="#282828"/><circle cx="7.0" cy="4.5" r="1.35" fill="#ececec"/></svg><svg class="i" style="left:1195px;top:728px;" width="16" height="16" viewBox="0 0 16 16"><path d="M7 0h2v7h7v2H9v7H7V9H0V7h7z" fill="#41c11f"/></svg><div style="left:390px;top:767px;width:116px;height:28px;background:#282828;"></div>
<div style="left:390px;top:795px;width:826px;height:2px;background:#5a5a5a;"></div><span class="t" style="left:395.00px;top:774px;font-size:13px;color:#f0f0f0;letter-spacing:-0.711px;-webkit-text-stroke:0.22px;">Parts</span><svg class="i" style="left:485.0px;top:776.5px;" width="14" height="9" viewBox="0 0 14 9"><path d="M0 4.5Q7.0 -4.2749999999999995 14 4.5Q7.0 13.274999999999999 0 4.5z" fill="#ececec"/><circle cx="7.0" cy="4.5" r="2.97" fill="#282828"/><circle cx="7.0" cy="4.5" r="1.35" fill="#ececec"/></svg><svg class="i" style="left:1195px;top:772px;" width="16" height="16" viewBox="0 0 16 16"><path d="M7 0h2v7h7v2H9v7H7V9H0V7h7z" fill="#41c11f"/></svg><div style="left:390px;top:811px;width:116px;height:28px;background:#1f4b60;"></div>
<div style="left:390px;top:839px;width:826px;height:2px;background:#5a5a5a;"></div><span class="t" style="left:395.00px;top:818px;font-size:13px;color:#f0f0f0;letter-spacing:-0.689px;-webkit-text-stroke:0.22px;">Flow Group #1</span><svg class="i" style="left:485.0px;top:820.5px;" width="14" height="9" viewBox="0 0 14 9"><path d="M0 4.5Q7.0 -4.2749999999999995 14 4.5Q7.0 13.274999999999999 0 4.5z" fill="#ececec"/><circle cx="7.0" cy="4.5" r="2.97" fill="#1f4b60"/><circle cx="7.0" cy="4.5" r="1.35" fill="#ececec"/></svg><svg class="i" style="left:1195px;top:816px;" width="16" height="16" viewBox="0 0 16 16"><path d="M7 0h2v7h7v2H9v7H7V9H0V7h7z" fill="#41c11f"/></svg><div style="left:390px;top:855px;width:116px;height:28px;background:#282828;"></div>
<div style="left:390px;top:883px;width:826px;height:2px;background:#5a5a5a;"></div><span class="t" style="left:395.00px;top:862px;font-size:13px;color:#f0f0f0;letter-spacing:-0.689px;-webkit-text-stroke:0.22px;">Flow Group #2</span><svg class="i" style="left:485.0px;top:864.5px;" width="14" height="9" viewBox="0 0 14 9"><path d="M0 4.5Q7.0 -4.2749999999999995 14 4.5Q7.0 13.274999999999999 0 4.5z" fill="#ececec"/><circle cx="7.0" cy="4.5" r="2.97" fill="#282828"/><circle cx="7.0" cy="4.5" r="1.35" fill="#ececec"/></svg><svg class="i" style="left:1195px;top:860px;" width="16" height="16" viewBox="0 0 16 16"><path d="M7 0h2v7h7v2H9v7H7V9H0V7h7z" fill="#41c11f"/></svg><div style="left:390px;top:899px;width:116px;height:28px;background:#282828;"></div>
<div style="left:390px;top:927px;width:826px;height:2px;background:#5a5a5a;"></div><span class="t" style="left:395.00px;top:906px;font-size:13px;color:#f0f0f0;letter-spacing:-0.689px;-webkit-text-stroke:0.22px;">Flow Group #3</span><svg class="i" style="left:485.0px;top:908.5px;" width="14" height="9" viewBox="0 0 14 9"><path d="M0 4.5Q7.0 -4.2749999999999995 14 4.5Q7.0 13.274999999999999 0 4.5z" fill="#ececec"/><circle cx="7.0" cy="4.5" r="2.97" fill="#282828"/><circle cx="7.0" cy="4.5" r="1.35" fill="#ececec"/></svg><svg class="i" style="left:1195px;top:904px;" width="16" height="16" viewBox="0 0 16 16"><path d="M7 0h2v7h7v2H9v7H7V9H0V7h7z" fill="#41c11f"/></svg><div style="left:1216px;top:666px;width:17px;height:264px;background:#4c4c4c;border-left:1px solid #626262;border-right:2px solid #5c5c5c"></div>
<div style="left:1220px;top:666px;width:8px;height:243px;background:#6a6a6a;"></div><svg class="i" style="left:1219.5px;top:916px" width="10" height="8"><path d="M0.5 0.5H9.5L5 7.5z" fill="#5e5e5e"/></svg><div style="left:390px;top:927px;width:843px;height:3px;background:#575757;"></div><svg class="i" style="left:0;top:0" width="1520" height="952"><polygon points="515.25,823.75 527.75,810.95 627.05,810.95 639.55,823.75 627.05,836.55 527.75,836.55" fill="#3d3d3d" stroke="#5c5c5c" stroke-width="1"/><polygon points="552.40,804.00 556.90,799.00 597.90,799.00 602.40,804.00 597.90,809.00 556.90,809.00" fill="#2c2c2c" stroke="#5c5c5c" stroke-width="1"/><polygon points="641.85,823.75 652.85,812.75 663.85,823.75 652.85,834.75" fill="#ffffff"/><g fill="none" stroke="#0c0c0c" stroke-width="2"><path d="M650.25 819.35H658.45L657.0500000000001 827.95H648.25"/></g><path d="M645.25 821.55H653.85M646.45 824.35H653.65" stroke="#4a4a4a" stroke-width="1.2" fill="none"/><polygon points="666.35,823.75 678.85,810.95 763.55,810.95 776.05,823.75 763.55,836.55 678.85,836.55" fill="#3d3d3d" stroke="#5c5c5c" stroke-width="1"/><polygon points="696.20,804.00 700.70,799.00 741.70,799.00 746.20,804.00 741.70,809.00 700.70,809.00" fill="#2c2c2c" stroke="#5c5c5c" stroke-width="1"/><polygon points="778.35,823.75 789.35,812.75 800.35,823.75 789.35,834.75" fill="#ffffff"/><ellipse cx="789.35" cy="824.05" rx="7.2" ry="4.8" fill="none" stroke="#1a1a1a" stroke-width="1.1"/><circle cx="785.5500000000001" cy="819.55" r="1.9" fill="#c8202a"/><polygon points="802.85,823.75 815.35,810.95 884.45,810.95 896.95,823.75 884.45,836.55 815.35,836.55" fill="#3d3d3d" stroke="#5c5c5c" stroke-width="1"/><polygon points="824.90,804.00 829.40,799.00 870.40,799.00 874.90,804.00 870.40,809.00 829.40,809.00" fill="#2c2c2c" stroke="#5c5c5c" stroke-width="1"/><polygon points="899.25,823.75 910.25,812.75 921.25,823.75 910.25,834.75" fill="#ffffff"/><ellipse cx="910.25" cy="824.05" rx="7.2" ry="4.8" fill="none" stroke="#1a1a1a" stroke-width="1.1"/><circle cx="906.45" cy="819.55" r="1.9" fill="#c8202a"/><polygon points="923.75,823.75 936.25,810.95 988.45,810.95 1000.95,823.75 988.45,836.55 936.25,836.55" fill="#2e7392" stroke="#43c6ee" stroke-width="1.5"/><polygon points="937.35,804.00 941.85,799.00 982.85,799.00 987.35,804.00 982.85,809.00 941.85,809.00" fill="#2c2c2c" stroke="#5c5c5c" stroke-width="1"/><polygon points="515.25,867.75 527.75,854.95 611.20,854.95 623.70,867.75 611.20,880.55 527.75,880.55" fill="#3d3d3d" stroke="#5c5c5c" stroke-width="1"/><polygon points="544.48,848.00 548.98,843.00 589.98,843.00 594.48,848.00 589.98,853.00 548.98,853.00" fill="#2c2c2c" stroke="#5c5c5c" stroke-width="1"/><polygon points="626.0,867.75 637.0,856.75 648.0,867.75 637.0,878.75" fill="#ffffff"/><g fill="none" stroke="#0c0c0c" stroke-width="2"><path d="M634.4 863.35H642.6L641.2 871.95H632.4"/></g><path d="M629.4 865.55H638.0M630.6 868.35H637.8" stroke="#4a4a4a" stroke-width="1.2" fill="none"/><polygon points="650.50,867.75 663.00,854.95 732.10,854.95 744.60,867.75 732.10,880.55 663.00,880.55" fill="#3d3d3d" stroke="#5c5c5c" stroke-width="1"/><polygon points="672.55,848.00 677.05,843.00 718.05,843.00 722.55,848.00 718.05,853.00 677.05,853.00" fill="#2c2c2c" stroke="#5c5c5c" stroke-width="1"/><polygon points="515.25,911.75 527.75,898.95 594.95,898.95 607.45,911.75 594.95,924.55 527.75,924.55" fill="#3d3d3d" stroke="#5c5c5c" stroke-width="1"/><polygon points="536.35,892.00 540.85,887.00 581.85,887.00 586.35,892.00 581.85,897.00 540.85,897.00" fill="#2c2c2c" stroke="#5c5c5c" stroke-width="1"/><polygon points="609.75,911.75 620.75,900.75 631.75,911.75 620.75,922.75" fill="#ffffff"/><g fill="none" stroke="#0c0c0c" stroke-width="2"><path d="M618.15 907.35H626.35L624.95 915.95H616.15"/></g><path d="M613.15 909.55H621.75M614.35 912.35H621.55" stroke="#4a4a4a" stroke-width="1.2" fill="none"/><polygon points="634.25,911.75 646.75,898.95 698.95,898.95 711.45,911.75 698.95,924.55 646.75,924.55" fill="#3d3d3d" stroke="#5c5c5c" stroke-width="1"/><polygon points="647.85,892.00 652.35,887.00 693.35,887.00 697.85,892.00 693.35,897.00 652.35,897.00" fill="#2c2c2c" stroke="#5c5c5c" stroke-width="1"/></svg><span class="t" style="left:532.25px;top:819px;font-size:13px;color:#eeeeee;letter-spacing:-0.774px;-webkit-text-stroke:0.22px;">FeederBrakeDisk</span>
<span class="t" style="left:683.35px;top:819px;font-size:13px;color:#eeeeee;letter-spacing:-0.670px;-webkit-text-stroke:0.22px;">AddBrakeDisk</span>
<span class="t" style="left:819.85px;top:819px;font-size:13px;color:#eeeeee;letter-spacing:-0.615px;-webkit-text-stroke:0.22px;">AddSpacer</span>
<span class="t" style="left:940.75px;top:819px;font-size:13px;color:#ffffff;letter-spacing:-0.748px;-webkit-text-stroke:0.22px;">AddRim</span>
<span class="t" style="left:532.25px;top:863px;font-size:13px;color:#eeeeee;letter-spacing:-0.785px;-webkit-text-stroke:0.22px;">FeederSpacer</span>
<span class="t" style="left:667.50px;top:863px;font-size:13px;color:#eeeeee;letter-spacing:-0.615px;-webkit-text-stroke:0.22px;">AddSpacer</span>
<span class="t" style="left:532.25px;top:907px;font-size:13px;color:#eeeeee;letter-spacing:-0.850px;-webkit-text-stroke:0.22px;">FeederRim</span>
<span class="t" style="left:651.25px;top:907px;font-size:13px;color:#eeeeee;letter-spacing:-0.748px;-webkit-text-stroke:0.22px;">AddRim</span><div style="left:380px;top:935px;width:35px;height:20px;background:#2d2d2d;border:1px solid #4a4a4a"></div><span class="t" style="right:1115.16px;top:941px;font-size:15px;color:#9a9a9a;letter-spacing:-0.360px;">Output</span>
<span class="t" style="left:424.90px;top:941px;font-size:15px;color:#e8e8e8;letter-spacing:-0.465px;">Process Flow Editor</span><div style="left:559px;top:935px;width:680px;height:20px;border-left:1px solid #555555;border-top:1px solid #555555"></div>
<!-- right panel -->
<div style="left:1243px;top:69px;width:277px;height:1px;background:#555555;"></div>
<div style="left:1243px;top:69px;width:1px;height:883px;background:#555555;"></div>
<div style="left:1244px;top:70px;width:276px;height:30px;background:#333333;"></div><span class="t" style="left:1252.50px;top:77px;font-size:15.5px;color:#f0f0f0;letter-spacing:0.066px;">Routine Properties</span>
<span class="t" style="left:1249.50px;top:114px;font-size:18.5px;color:#2e7594;letter-spacing:-1.256px;-webkit-text-stroke:0.4px #282828;">AddBrakeDisk</span>
<span class="t" style="left:1249.50px;top:154px;font-size:12.5px;color:#6c6c6c;letter-spacing:-0.782px;-webkit-text-stroke:0.22px;">Name</span><div style="left:1425px;top:150px;width:100px;height:21px;border:1px solid #5c5c5c"></div><span class="t" style="left:1433.00px;top:155px;font-size:12.5px;color:#7a7a7a;letter-spacing:-0.518px;-webkit-text-stroke:0.22px;">AddBrakeDisk</span>
<span class="t" style="left:1249.10px;top:181px;font-size:12.5px;color:#f4f4f4;font-weight:700;letter-spacing:-0.238px;-webkit-text-stroke:0.22px;">Variables</span><div style="left:1254px;top:202px;width:270px;height:20px;background:#8fbfe3;"></div>
<div style="left:1283px;top:202px;width:1px;height:20px;background:#3a4a58;"></div><span class="t" style="left:1256.25px;top:207px;font-size:12.5px;color:#151515;letter-spacing:-1.034px;-webkit-text-stroke:0.22px;">Type</span>
<span class="t" style="left:1286.25px;top:207px;font-size:12.5px;color:#151515;letter-spacing:-0.782px;-webkit-text-stroke:0.22px;">Name</span><div style="left:1284px;top:222px;width:240px;height:21px;border:1px solid #666666"></div><span class="t" style="left:1292.25px;top:228px;font-size:12.5px;color:#7c7c7c;letter-spacing:-0.490px;-webkit-text-stroke:0.22px;">ArriveBrakeDisk</span><div style="left:1249px;top:250px;width:280px;height:21px;border:1px solid #5c5c5c"></div><span class="t" style="left:1252.25px;top:255px;font-size:12.5px;color:#6e6e6e;letter-spacing:-0.900px;-webkit-text-stroke:0.22px;">Add new variables</span>
<!-- dialogs -->
<div class="dlg" style="left:263px;top:53px;width:350px;height:267px;"><div style="left:0px;top:0px;width:350px;height:267px;background:#595959;border:2px solid #595959"></div><span class="t" style="left:10.60px;top:10px;font-size:14px;color:#f2f2f2;letter-spacing:-0.368px;-webkit-text-stroke:0.12px;">Process Node #23::ProcessExecutor</span><svg class="i" style="left:322px;top:11.4px;" width="12" height="11.2" viewBox="0 0 12 11.2"><path d="M1.3 1.2L10.7 10M10.7 1.2L1.3 10" stroke="#d6d6d6" stroke-width="2.7" fill="none"/></svg><div style="left:5px;top:31px;width:340px;height:231px;background:#282828;border:1px solid #6a6a6a;border-left-width:2px;border-right-width:2px;border-bottom-width:2px"></div>
<div style="left:94.5px;top:32px;width:248.5px;height:29px;background:#303030;border-left:1px solid #5c5c5c;border-bottom:1px solid #5c5c5c"></div><span class="t" style="left:14.20px;top:39px;font-size:13px;color:#f2f2f2;letter-spacing:-0.848px;-webkit-text-stroke:0.22px;">AddRim</span><svg class="i" style="left:68.9px;top:37.5px;" width="12" height="15" viewBox="0 0 12 15"><g fill="none" stroke="#e6e6e6" stroke-width="1.15"><path d="M3.9 2.4V0.9h4.2v1.5"/><path d="M0.3 2.9h11.4"/><path d="M1.7 3.4V13.9h8.6V3.4"/><path d="M4.6 5.3v6.6M7.4 5.3v6.6"/></g></svg><svg class="i" style="left:291px;top:38px;" width="16" height="16" viewBox="0 0 16 16"><path d="M6.2 0h3.6v6.2H16v3.6H9.8V16H6.2V9.8H0V6.2h6.2z" fill="#3fae21"/></svg><svg class="i" style="left:319px;top:36px;" width="20" height="20" viewBox="0 0 20 20"><rect x="0.5" y="0.5" width="19" height="19" fill="#353535" stroke="#8e8e8e"/><rect x="2.4000000000000004" y="2.4000000000000004" width="3.6" height="3.6" rx="1.8" fill="#f2f2f2"/><rect x="7.500000000000001" y="2.4000000000000004" width="3.6" height="3.6" rx="1.8" fill="#f2f2f2"/><rect x="12.6" y="2.4000000000000004" width="3.6" height="3.6" rx="1.8" fill="#f2f2f2"/><rect x="2.4000000000000004" y="7.500000000000001" width="3.6" height="3.6" rx="1.8" fill="#f2f2f2"/><rect x="7.500000000000001" y="7.500000000000001" width="3.6" height="3.6" rx="1.8" fill="#f2f2f2"/><rect x="12.6" y="7.500000000000001" width="3.6" height="3.6" rx="1.8" fill="#f2f2f2"/><rect x="2.4000000000000004" y="12.6" width="3.6" height="3.6" rx="1.8" fill="#f2f2f2"/><rect x="7.500000000000001" y="12.6" width="3.6" height="3.6" rx="1.8" fill="#f2f2f2"/><circle cx="14.6" cy="14.6" r="3.7" fill="#2fa31a"/><path d="M14.6 12.3v4.6M12.3 14.6h4.6" stroke="#1c3a14" stroke-width="1.1"/></svg><div style="left:11px;top:65px;width:328px;height:191px;background:#282828;border:1px solid #6a6a6a"></div>
<div style="left:12px;top:117px;width:326px;height:3px;background:#5e5e5e;"></div>
<div style="left:12px;top:66px;width:326px;height:189px;overflow:hidden"><svg class="i" style="left:23px;top:57px;" width="14" height="14" viewBox="0 0 14 14"><path d="M0.9 8.6V13.1H13.1V8.6" fill="none" stroke="#f4f4f4" stroke-width="1.8"/><rect x="3.7" y="4.9" width="6.6" height="6.5" fill="#e9a100"/><circle cx="7" cy="8.3" r="1.7" fill="#e9a100" stroke="#3c2a05" stroke-width="1.1"/><path d="M7 0.2L9.5 3.2H8V6H6V3.2H4.5z" fill="#2c9c22"/></svg><span class="t" style="left:40.40px;top:59px;font-size:12.5px;color:#f0f0f0;letter-spacing:-0.369px;-webkit-text-stroke:0.22px;">TransportIn: Any product as Spacer</span><svg class="i" style="left:229.70000000000002px;top:57px;" width="16" height="14" viewBox="0 0 16 14"><g fill="none" stroke="#49a5e2" stroke-width="1.2"><path d="M0.6 8.6V2.2Q0.6 0.6 2.2 0.6H11.2"/><rect x="3.6" y="3.2" width="11.8" height="10.2" rx="1"/><path d="M6.4 8.4l2.2 2.2 4-4.6" stroke-width="1.5"/></g></svg><svg class="i" style="left:310px;top:59.0px;" width="10" height="10" viewBox="0 0 10 10"><circle cx="5" cy="5" r="5" fill="#008200"/></svg><svg class="i" style="left:23px;top:77px;" width="14" height="15" viewBox="0 0 14 15"><rect x="1.2" y="0" width="9.6" height="3.2" rx="1.2" fill="#2fae6e"/><rect x="0.2" y="4.4" width="9" height="3.2" rx="1" fill="#f2b01e"/><rect x="1.2" y="8.8" width="5.6" height="2.8" rx="1" fill="#2fae6e"/><path d="M7.2 4.6c0-1.4 2-1.4 2 0v3.2l3.2 0.8c1.2 0.4 1.4 1.2 1.2 2.2l-0.6 2.2c-0.2 0.8-0.8 1.2-1.6 1.2H9.2c-0.8 0-1.2-0.4-1.6-1L5.6 10c-0.4-0.8 0.6-1.6 1.6-0.6z" fill="#f6a51c"/></svg><span class="t" style="left:43.30px;top:79px;font-size:12.5px;color:#f0f0f0;letter-spacing:-0.460px;-webkit-text-stroke:0.22px;">GetAssembly: Assembly step as AssemblyOrderRim</span><svg class="i" style="left:23px;top:97px;" width="14" height="14" viewBox="0 0 14 14"><path d="M0.9 8.6V13.1H13.1V8.6" fill="none" stroke="#f4f4f4" stroke-width="1.8"/><rect x="3.7" y="4.9" width="6.6" height="6.5" fill="#e9a100"/><circle cx="7" cy="8.3" r="1.7" fill="#e9a100" stroke="#3c2a05" stroke-width="1.1"/><path d="M7 0.2L9.5 3.2H8V6H6V3.2H4.5z" fill="#2c9c22"/></svg><span class="t" style="left:40.40px;top:99px;font-size:12.5px;color:#f0f0f0;letter-spacing:-0.434px;-webkit-text-stroke:0.22px;">TransportIn: Spacer, AssemblyOrderRim as ArriveRim</span><svg class="i" style="left:322.7px;top:97px;" width="16" height="14" viewBox="0 0 16 14"><g fill="none" stroke="#49a5e2" stroke-width="1.2"><path d="M0.6 8.6V2.2Q0.6 0.6 2.2 0.6H11.2"/><rect x="3.6" y="3.2" width="11.8" height="10.2" rx="1"/><path d="M6.4 8.4l2.2 2.2 4-4.6" stroke-width="1.5"/></g></svg><svg class="i" style="left:23px;top:117px;" width="14" height="14" viewBox="0 0 14 14"><path d="M0.9 8.6V13.1H13.1V8.6" fill="none" stroke="#f4f4f4" stroke-width="1.8"/><rect x="3.7" y="4.9" width="6.6" height="6.5" fill="#e9a100"/><circle cx="7" cy="8.3" r="1.7" fill="#e9a100" stroke="#3c2a05" stroke-width="1.1"/><path d="M7 0.2L9.5 3.2H8V6H6V3.2H4.5z" fill="#2c9c22"/></svg><span class="t" style="left:43.30px;top:119px;font-size:12.5px;color:#f0f0f0;letter-spacing:-0.459px;-webkit-text-stroke:0.22px;">TransportOut: Spacer</span></div></div>
<div class="dlg" style="left:715px;top:41px;width:350px;height:185px;"><div style="left:0px;top:0px;width:350px;height:185px;background:#4d4d4d;border:2px solid #3b3b3b"></div><span class="t" style="left:10.60px;top:10px;font-size:14px;color:#f2f2f2;letter-spacing:-0.451px;-webkit-text-stroke:0.12px;">Feeder Process #2::ProcessExecutor</span><svg class="i" style="left:322px;top:11.4px;" width="12" height="11.2" viewBox="0 0 12 11.2"><path d="M1.3 1.2L10.7 10M10.7 1.2L1.3 10" stroke="#c6c6c6" stroke-width="2.7" fill="none"/></svg><div style="left:5px;top:31px;width:340px;height:149px;background:#282828;border:1px solid #6a6a6a;border-left-width:2px;border-right-width:2px;border-bottom-width:2px"></div>
<div style="left:123.5px;top:32px;width:219.5px;height:29px;background:#303030;border-left:1px solid #5c5c5c;border-bottom:1px solid #5c5c5c"></div><span class="t" style="left:14.20px;top:39px;font-size:13px;color:#f2f2f2;letter-spacing:-1.035px;-webkit-text-stroke:0.22px;">FeederSpacer</span><svg class="i" style="left:97.9px;top:37.5px;" width="12" height="15" viewBox="0 0 12 15"><g fill="none" stroke="#e6e6e6" stroke-width="1.15"><path d="M3.9 2.4V0.9h4.2v1.5"/><path d="M0.3 2.9h11.4"/><path d="M1.7 3.4V13.9h8.6V3.4"/><path d="M4.6 5.3v6.6M7.4 5.3v6.6"/></g></svg><svg class="i" style="left:291px;top:38px;" width="16" height="16" viewBox="0 0 16 16"><path d="M6.2 0h3.6v6.2H16v3.6H9.8V16H6.2V9.8H0V6.2h6.2z" fill="#3fae21"/></svg><svg class="i" style="left:319px;top:36px;" width="20" height="20" viewBox="0 0 20 20"><rect x="0.5" y="0.5" width="19" height="19" fill="#353535" stroke="#8e8e8e"/><rect x="2.4000000000000004" y="2.4000000000000004" width="3.6" height="3.6" rx="1.8" fill="#f2f2f2"/><rect x="7.500000000000001" y="2.4000000000000004" width="3.6" height="3.6" rx="1.8" fill="#f2f2f2"/><rect x="12.6" y="2.4000000000000004" width="3.6" height="3.6" rx="1.8" fill="#f2f2f2"/><rect x="2.4000000000000004" y="7.500000000000001" width="3.6" height="3.6" rx="1.8" fill="#f2f2f2"/><rect x="7.500000000000001" y="7.500000000000001" width="3.6" height="3.6" rx="1.8" fill="#f2f2f2"/><rect x="12.6" y="7.500000000000001" width="3.6" height="3.6" rx="1.8" fill="#f2f2f2"/><rect x="2.4000000000000004" y="12.6" width="3.6" height="3.6" rx="1.8" fill="#f2f2f2"/><rect x="7.500000000000001" y="12.6" width="3.6" height="3.6" rx="1.8" fill="#f2f2f2"/><circle cx="14.6" cy="14.6" r="3.7" fill="#2fa31a"/><path d="M14.6 12.3v4.6M12.3 14.6h4.6" stroke="#1c3a14" stroke-width="1.1"/></svg><div style="left:11px;top:65px;width:328px;height:109px;background:#282828;border:1px solid #6a6a6a"></div>
<div style="left:12px;top:94px;width:326px;height:3px;background:#5e5e5e;"></div>
<div style="left:12px;top:66px;width:326px;height:107px;overflow:hidden"><svg class="i" style="left:23px;top:34px;" width="15" height="15" viewBox="0 0 15 15"><path d="M0 2.2L2 0H11.2V9.4L9.2 11.6H0z" fill="#f7ad05"/><path d="M9.2 2.2L11.2 0V9.4L9.2 11.6z" fill="#ffd257"/><path d="M0 2.2L2 0H11.2L9.2 2.2z" fill="#ffc125"/><circle cx="11.3" cy="11.2" r="2.5" fill="#282828" stroke="#2ea021" stroke-width="1.5"/></svg><span class="t" style="left:43.30px;top:36px;font-size:12.5px;color:#f0f0f0;letter-spacing:-0.505px;-webkit-text-stroke:0.22px;">Create: Spacer as ProductIn</span><svg class="i" style="left:23px;top:54px;" width="14" height="14" viewBox="0 0 14 14"><path d="M0.9 8.6V13.1H13.1V8.6" fill="none" stroke="#f4f4f4" stroke-width="1.8"/><rect x="3.7" y="4.9" width="6.6" height="6.5" fill="#e9a100"/><circle cx="7" cy="8.3" r="1.7" fill="#e9a100" stroke="#3c2a05" stroke-width="1.1"/><path d="M7 0.2L9.5 3.2H8V6H6V3.2H4.5z" fill="#2c9c22"/></svg><span class="t" style="left:43.30px;top:56px;font-size:12.5px;color:#f0f0f0;letter-spacing:-0.301px;-webkit-text-stroke:0.22px;">TransportOut: ProductIn</span><svg class="i" style="left:310px;top:56.0px;" width="10" height="10" viewBox="0 0 10 10"><circle cx="5" cy="5" r="5" fill="#008200"/></svg></div></div>
<div class="dlg" style="left:1004px;top:283px;width:350px;height:222px;"><div style="left:0px;top:0px;width:350px;height:222px;background:#4d4d4d;border:2px solid #3b3b3b"></div><span class="t" style="left:10.60px;top:10px;font-size:14px;color:#f2f2f2;letter-spacing:-0.451px;-webkit-text-stroke:0.12px;">Feeder Process #4::ProcessExecutor</span><svg class="i" style="left:322px;top:11.4px;" width="12" height="11.2" viewBox="0 0 12 11.2"><path d="M1.3 1.2L10.7 10M10.7 1.2L1.3 10" stroke="#c6c6c6" stroke-width="2.7" fill="none"/></svg><div style="left:5px;top:31px;width:340px;height:186px;background:#282828;border:1px solid #6a6a6a;border-left-width:2px;border-right-width:2px;border-bottom-width:2px"></div>
<div style="left:108.0px;top:32px;width:235.0px;height:29px;background:#303030;border-left:1px solid #5c5c5c;border-bottom:1px solid #5c5c5c"></div><span class="t" style="left:14.20px;top:39px;font-size:13px;color:#f2f2f2;letter-spacing:-1.100px;-webkit-text-stroke:0.22px;">FeederRim</span><svg class="i" style="left:82.4px;top:37.5px;" width="12" height="15" viewBox="0 0 12 15"><g fill="none" stroke="#e6e6e6" stroke-width="1.15"><path d="M3.9 2.4V0.9h4.2v1.5"/><path d="M0.3 2.9h11.4"/><path d="M1.7 3.4V13.9h8.6V3.4"/><path d="M4.6 5.3v6.6M7.4 5.3v6.6"/></g></svg><svg class="i" style="left:291px;top:38px;" width="16" height="16" viewBox="0 0 16 16"><path d="M6.2 0h3.6v6.2H16v3.6H9.8V16H6.2V9.8H0V6.2h6.2z" fill="#3fae21"/></svg><svg class="i" style="left:319px;top:36px;" width="20" height="20" viewBox="0 0 20 20"><rect x="0.5" y="0.5" width="19" height="19" fill="#353535" stroke="#8e8e8e"/><rect x="2.4000000000000004" y="2.4000000000000004" width="3.6" height="3.6" rx="1.8" fill="#f2f2f2"/><rect x="7.500000000000001" y="2.4000000000000004" width="3.6" height="3.6" rx="1.8" fill="#f2f2f2"/><rect x="12.6" y="2.4000000000000004" width="3.6" height="3.6" rx="1.8" fill="#f2f2f2"/><rect x="2.4000000000000004" y="7.500000000000001" width="3.6" height="3.6" rx="1.8" fill="#f2f2f2"/><rect x="7.500000000000001" y="7.500000000000001" width="3.6" height="3.6" rx="1.8" fill="#f2f2f2"/><rect x="12.6" y="7.500000000000001" width="3.6" height="3.6" rx="1.8" fill="#f2f2f2"/><rect x="2.4000000000000004" y="12.6" width="3.6" height="3.6" rx="1.8" fill="#f2f2f2"/><rect x="7.500000000000001" y="12.6" width="3.6" height="3.6" rx="1.8" fill="#f2f2f2"/><circle cx="14.6" cy="14.6" r="3.7" fill="#2fa31a"/><path d="M14.6 12.3v4.6M12.3 14.6h4.6" stroke="#1c3a14" stroke-width="1.1"/></svg><div style="left:11px;top:65px;width:328px;height:146px;background:#282828;border:1px solid #6a6a6a"></div>
<div style="left:12px;top:104px;width:326px;height:3px;background:#5e5e5e;"></div>
<div style="left:12px;top:66px;width:326px;height:144px;overflow:hidden"><svg class="i" style="left:23px;top:44px;" width="15" height="15" viewBox="0 0 15 15"><path d="M0 2.2L2 0H11.2V9.4L9.2 11.6H0z" fill="#f7ad05"/><path d="M9.2 2.2L11.2 0V9.4L9.2 11.6z" fill="#ffd257"/><path d="M0 2.2L2 0H11.2L9.2 2.2z" fill="#ffc125"/><circle cx="11.3" cy="11.2" r="2.5" fill="#282828" stroke="#2ea021" stroke-width="1.5"/></svg><span class="t" style="left:43.30px;top:46px;font-size:12.5px;color:#f0f0f0;letter-spacing:-0.475px;-webkit-text-stroke:0.22px;">Create: Rim as ProductIn</span><svg class="i" style="left:23px;top:64px;" width="14" height="14" viewBox="0 0 14 14"><path d="M0.9 8.6V13.1H13.1V8.6" fill="none" stroke="#f4f4f4" stroke-width="1.8"/><rect x="3.7" y="4.9" width="6.6" height="6.5" fill="#e9a100"/><circle cx="7" cy="8.3" r="1.7" fill="#e9a100" stroke="#3c2a05" stroke-width="1.1"/><path d="M7 0.2L9.5 3.2H8V6H6V3.2H4.5z" fill="#2c9c22"/></svg><span class="t" style="left:43.30px;top:66px;font-size:12.5px;color:#f0f0f0;letter-spacing:-0.301px;-webkit-text-stroke:0.22px;">TransportOut: ProductIn</span><svg class="i" style="left:310px;top:66.0px;" width="10" height="10" viewBox="0 0 10 10"><circle cx="5" cy="5" r="5" fill="#008200"/></svg></div></div>
<div class="dlg" style="left:1001px;top:500px;width:503px;height:225px;"><div style="left:0px;top:0px;width:503px;height:225px;background:#4d4d4d;border:2px solid #3b3b3b"></div><span class="t" style="left:10.60px;top:10px;font-size:14px;color:#f2f2f2;letter-spacing:-0.368px;-webkit-text-stroke:0.12px;">Process Node #19::ProcessExecutor</span><svg class="i" style="left:475px;top:11.4px;" width="12" height="11.2" viewBox="0 0 12 11.2"><path d="M1.3 1.2L10.7 10M10.7 1.2L1.3 10" stroke="#c6c6c6" stroke-width="2.7" fill="none"/></svg><div style="left:5px;top:31px;width:493px;height:189px;background:#282828;border:1px solid #6a6a6a;border-left-width:2px;border-right-width:2px;border-bottom-width:2px"></div>
<div style="left:110.0px;top:32px;width:386.0px;height:29px;background:#303030;border-left:1px solid #5c5c5c;border-bottom:1px solid #5c5c5c"></div><span class="t" style="left:14.20px;top:39px;font-size:13px;color:#f2f2f2;letter-spacing:-0.853px;-webkit-text-stroke:0.22px;">AddSpacer</span><svg class="i" style="left:84.4px;top:37.5px;" width="12" height="15" viewBox="0 0 12 15"><g fill="none" stroke="#e6e6e6" stroke-width="1.15"><path d="M3.9 2.4V0.9h4.2v1.5"/><path d="M0.3 2.9h11.4"/><path d="M1.7 3.4V13.9h8.6V3.4"/><path d="M4.6 5.3v6.6M7.4 5.3v6.6"/></g></svg><svg class="i" style="left:444px;top:38px;" width="16" height="16" viewBox="0 0 16 16"><path d="M6.2 0h3.6v6.2H16v3.6H9.8V16H6.2V9.8H0V6.2h6.2z" fill="#3fae21"/></svg><svg class="i" style="left:472px;top:36px;" width="20" height="20" viewBox="0 0 20 20"><rect x="0.5" y="0.5" width="19" height="19" fill="#353535" stroke="#8e8e8e"/><rect x="2.4000000000000004" y="2.4000000000000004" width="3.6" height="3.6" rx="1.8" fill="#f2f2f2"/><rect x="7.500000000000001" y="2.4000000000000004" width="3.6" height="3.6" rx="1.8" fill="#f2f2f2"/><rect x="12.6" y="2.4000000000000004" width="3.6" height="3.6" rx="1.8" fill="#f2f2f2"/><rect x="2.4000000000000004" y="7.500000000000001" width="3.6" height="3.6" rx="1.8" fill="#f2f2f2"/><rect x="7.500000000000001" y="7.500000000000001" width="3.6" height="3.6" rx="1.8" fill="#f2f2f2"/><rect x="12.6" y="7.500000000000001" width="3.6" height="3.6" rx="1.8" fill="#f2f2f2"/><rect x="2.4000000000000004" y="12.6" width="3.6" height="3.6" rx="1.8" fill="#f2f2f2"/><rect x="7.500000000000001" y="12.6" width="3.6" height="3.6" rx="1.8" fill="#f2f2f2"/><circle cx="14.6" cy="14.6" r="3.7" fill="#2fa31a"/><path d="M14.6 12.3v4.6M12.3 14.6h4.6" stroke="#1c3a14" stroke-width="1.1"/></svg><div style="left:11px;top:65px;width:481px;height:149px;background:#282828;border:1px solid #6a6a6a"></div>
<div style="left:12px;top:105px;width:479px;height:3px;background:#5e5e5e;"></div>
<div style="left:12px;top:66px;width:479px;height:147px;overflow:hidden"><svg class="i" style="left:23px;top:45px;" width="14" height="14" viewBox="0 0 14 14"><path d="M0.9 8.6V13.1H13.1V8.6" fill="none" stroke="#f4f4f4" stroke-width="1.8"/><rect x="3.7" y="4.9" width="6.6" height="6.5" fill="#e9a100"/><circle cx="7" cy="8.3" r="1.7" fill="#e9a100" stroke="#3c2a05" stroke-width="1.1"/><path d="M7 0.2L9.5 3.2H8V6H6V3.2H4.5z" fill="#2c9c22"/></svg><span class="t" style="left:40.40px;top:47px;font-size:12.5px;color:#f0f0f0;letter-spacing:-0.365px;-webkit-text-stroke:0.22px;">TransportIn: Any product as BrakeDisk</span><svg class="i" style="left:246.10000000000002px;top:45px;" width="16" height="14" viewBox="0 0 16 14"><g fill="none" stroke="#49a5e2" stroke-width="1.2"><path d="M0.6 8.6V2.2Q0.6 0.6 2.2 0.6H11.2"/><rect x="3.6" y="3.2" width="11.8" height="10.2" rx="1"/><path d="M6.4 8.4l2.2 2.2 4-4.6" stroke-width="1.5"/></g></svg><svg class="i" style="left:463px;top:47.0px;" width="10" height="10" viewBox="0 0 10 10"><circle cx="5" cy="5" r="5" fill="#008200"/></svg><svg class="i" style="left:23px;top:65px;" width="14" height="15" viewBox="0 0 14 15"><rect x="1.2" y="0" width="9.6" height="3.2" rx="1.2" fill="#2fae6e"/><rect x="0.2" y="4.4" width="9" height="3.2" rx="1" fill="#f2b01e"/><rect x="1.2" y="8.8" width="5.6" height="2.8" rx="1" fill="#2fae6e"/><path d="M7.2 4.6c0-1.4 2-1.4 2 0v3.2l3.2 0.8c1.2 0.4 1.4 1.2 1.2 2.2l-0.6 2.2c-0.2 0.8-0.8 1.2-1.6 1.2H9.2c-0.8 0-1.2-0.4-1.6-1L5.6 10c-0.4-0.8 0.6-1.6 1.6-0.6z" fill="#f6a51c"/></svg><span class="t" style="left:43.30px;top:67px;font-size:12.5px;color:#f0f0f0;letter-spacing:-0.443px;-webkit-text-stroke:0.22px;">GetAssembly: Assembly step as AssemblyOrderSpacer</span><svg class="i" style="left:23px;top:85px;" width="14" height="14" viewBox="0 0 14 14"><path d="M0.9 8.6V13.1H13.1V8.6" fill="none" stroke="#f4f4f4" stroke-width="1.8"/><rect x="3.7" y="4.9" width="6.6" height="6.5" fill="#e9a100"/><circle cx="7" cy="8.3" r="1.7" fill="#e9a100" stroke="#3c2a05" stroke-width="1.1"/><path d="M7 0.2L9.5 3.2H8V6H6V3.2H4.5z" fill="#2c9c22"/></svg><span class="t" style="left:40.40px;top:87px;font-size:12.5px;color:#f0f0f0;letter-spacing:-0.462px;-webkit-text-stroke:0.22px;">TransportIn: BrakeDisk, AssemblyOrderSpacer as ArriveSpacer</span><svg class="i" style="left:370.0px;top:85px;" width="16" height="14" viewBox="0 0 16 14"><g fill="none" stroke="#49a5e2" stroke-width="1.2"><path d="M0.6 8.6V2.2Q0.6 0.6 2.2 0.6H11.2"/><rect x="3.6" y="3.2" width="11.8" height="10.2" rx="1"/><path d="M6.4 8.4l2.2 2.2 4-4.6" stroke-width="1.5"/></g></svg><svg class="i" style="left:23px;top:105px;" width="14" height="14" viewBox="0 0 14 14"><path d="M0.9 8.6V13.1H13.1V8.6" fill="none" stroke="#f4f4f4" stroke-width="1.8"/><rect x="3.7" y="4.9" width="6.6" height="6.5" fill="#e9a100"/><circle cx="7" cy="8.3" r="1.7" fill="#e9a100" stroke="#3c2a05" stroke-width="1.1"/><path d="M7 0.2L9.5 3.2H8V6H6V3.2H4.5z" fill="#2c9c22"/></svg><span class="t" style="left:43.30px;top:107px;font-size:12.5px;color:#f0f0f0;letter-spacing:-0.417px;-webkit-text-stroke:0.22px;">TransportOut: BrakeDisk</span></div></div>
<div class="dlg" style="left:63px;top:459px;width:350px;height:217px;"><div style="left:0px;top:0px;width:350px;height:217px;background:#4d4d4d;border:2px solid #3b3b3b"></div><span class="t" style="left:10.60px;top:10px;font-size:14px;color:#f2f2f2;letter-spacing:-0.451px;-webkit-text-stroke:0.12px;">Feeder Process #5::ProcessExecutor</span><svg class="i" style="left:322px;top:11.4px;" width="12" height="11.2" viewBox="0 0 12 11.2"><path d="M1.3 1.2L10.7 10M10.7 1.2L1.3 10" stroke="#c6c6c6" stroke-width="2.7" fill="none"/></svg><div style="left:5px;top:31px;width:340px;height:181px;background:#282828;border:1px solid #6a6a6a;border-left-width:2px;border-right-width:2px;border-bottom-width:2px"></div>
<div style="left:139.5px;top:32px;width:203.5px;height:29px;background:#303030;border-left:1px solid #5c5c5c;border-bottom:1px solid #5c5c5c"></div><span class="t" style="left:14.20px;top:39px;font-size:13px;color:#f2f2f2;letter-spacing:-0.959px;-webkit-text-stroke:0.22px;">FeederBrakeDisk</span><svg class="i" style="left:113.9px;top:37.5px;" width="12" height="15" viewBox="0 0 12 15"><g fill="none" stroke="#e6e6e6" stroke-width="1.15"><path d="M3.9 2.4V0.9h4.2v1.5"/><path d="M0.3 2.9h11.4"/><path d="M1.7 3.4V13.9h8.6V3.4"/><path d="M4.6 5.3v6.6M7.4 5.3v6.6"/></g></svg><svg class="i" style="left:291px;top:38px;" width="16" height="16" viewBox="0 0 16 16"><path d="M6.2 0h3.6v6.2H16v3.6H9.8V16H6.2V9.8H0V6.2h6.2z" fill="#3fae21"/></svg><svg class="i" style="left:319px;top:36px;" width="20" height="20" viewBox="0 0 20 20"><rect x="0.5" y="0.5" width="19" height="19" fill="#353535" stroke="#8e8e8e"/><rect x="2.4000000000000004" y="2.4000000000000004" width="3.6" height="3.6" rx="1.8" fill="#f2f2f2"/><rect x="7.500000000000001" y="2.4000000000000004" width="3.6" height="3.6" rx="1.8" fill="#f2f2f2"/><rect x="12.6" y="2.4000000000000004" width="3.6" height="3.6" rx="1.8" fill="#f2f2f2"/><rect x="2.4000000000000004" y="7.500000000000001" width="3.6" height="3.6" rx="1.8" fill="#f2f2f2"/><rect x="7.500000000000001" y="7.500000000000001" width="3.6" height="3.6" rx="1.8" fill="#f2f2f2"/><rect x="12.6" y="7.500000000000001" width="3.6" height="3.6" rx="1.8" fill="#f2f2f2"/><rect x="2.4000000000000004" y="12.6" width="3.6" height="3.6" rx="1.8" fill="#f2f2f2"/><rect x="7.500000000000001" y="12.6" width="3.6" height="3.6" rx="1.8" fill="#f2f2f2"/><circle cx="14.6" cy="14.6" r="3.7" fill="#2fa31a"/><path d="M14.6 12.3v4.6M12.3 14.6h4.6" stroke="#1c3a14" stroke-width="1.1"/></svg><div style="left:11px;top:65px;width:328px;height:141px;background:#282828;border:1px solid #6a6a6a"></div>
<div style="left:12px;top:103px;width:326px;height:3px;background:#5e5e5e;"></div>
<div style="left:12px;top:66px;width:326px;height:139px;overflow:hidden"><svg class="i" style="left:23px;top:43px;" width="15" height="15" viewBox="0 0 15 15"><path d="M0 2.2L2 0H11.2V9.4L9.2 11.6H0z" fill="#f7ad05"/><path d="M9.2 2.2L11.2 0V9.4L9.2 11.6z" fill="#ffd257"/><path d="M0 2.2L2 0H11.2L9.2 2.2z" fill="#ffc125"/><circle cx="11.3" cy="11.2" r="2.5" fill="#282828" stroke="#2ea021" stroke-width="1.5"/></svg><span class="t" style="left:43.30px;top:45px;font-size:12.5px;color:#f0f0f0;letter-spacing:-0.508px;-webkit-text-stroke:0.22px;">Create: Brake Disc as ProductIn</span><svg class="i" style="left:23px;top:63px;" width="14" height="14" viewBox="0 0 14 14"><path d="M0.9 8.6V13.1H13.1V8.6" fill="none" stroke="#f4f4f4" stroke-width="1.8"/><rect x="3.7" y="4.9" width="6.6" height="6.5" fill="#e9a100"/><circle cx="7" cy="8.3" r="1.7" fill="#e9a100" stroke="#3c2a05" stroke-width="1.1"/><path d="M7 0.2L9.5 3.2H8V6H6V3.2H4.5z" fill="#2c9c22"/></svg><span class="t" style="left:43.30px;top:65px;font-size:12.5px;color:#f0f0f0;letter-spacing:-0.301px;-webkit-text-stroke:0.22px;">TransportOut: ProductIn</span><svg class="i" style="left:310px;top:65.0px;" width="10" height="10" viewBox="0 0 10 10"><circle cx="5" cy="5" r="5" fill="#008200"/></svg></div></div>
<div class="dlg" style="left:68px;top:675px;width:322px;height:300px;"><div style="left:0px;top:0px;width:322px;height:300px;background:#4d4d4d;border:2px solid #3b3b3b"></div><span class="t" style="left:10.60px;top:10px;font-size:14px;color:#f2f2f2;letter-spacing:-0.368px;-webkit-text-stroke:0.12px;">Process Node #24::ProcessExecutor</span><svg class="i" style="left:294px;top:11.4px;" width="12" height="11.2" viewBox="0 0 12 11.2"><path d="M1.3 1.2L10.7 10M10.7 1.2L1.3 10" stroke="#c6c6c6" stroke-width="2.7" fill="none"/></svg><div style="left:5px;top:31px;width:312px;height:264px;background:#282828;border:1px solid #6a6a6a;border-left-width:2px;border-right-width:2px;border-bottom-width:2px"></div>
<div style="left:125.8px;top:32px;width:189.2px;height:29px;background:#303030;border-left:1px solid #5c5c5c;border-bottom:1px solid #5c5c5c"></div><span class="t" style="left:14.20px;top:39px;font-size:13px;color:#f2f2f2;letter-spacing:-0.825px;-webkit-text-stroke:0.22px;">AddBrakeDisk</span><svg class="i" style="left:100.2px;top:37.5px;" width="12" height="15" viewBox="0 0 12 15"><g fill="none" stroke="#e6e6e6" stroke-width="1.15"><path d="M3.9 2.4V0.9h4.2v1.5"/><path d="M0.3 2.9h11.4"/><path d="M1.7 3.4V13.9h8.6V3.4"/><path d="M4.6 5.3v6.6M7.4 5.3v6.6"/></g></svg><svg class="i" style="left:263px;top:38px;" width="16" height="16" viewBox="0 0 16 16"><path d="M6.2 0h3.6v6.2H16v3.6H9.8V16H6.2V9.8H0V6.2h6.2z" fill="#3fae21"/></svg><svg class="i" style="left:291px;top:36px;" width="20" height="20" viewBox="0 0 20 20"><rect x="0.5" y="0.5" width="19" height="19" fill="#353535" stroke="#8e8e8e"/><rect x="2.4000000000000004" y="2.4000000000000004" width="3.6" height="3.6" rx="1.8" fill="#f2f2f2"/><rect x="7.500000000000001" y="2.4000000000000004" width="3.6" height="3.6" rx="1.8" fill="#f2f2f2"/><rect x="12.6" y="2.4000000000000004" width="3.6" height="3.6" rx="1.8" fill="#f2f2f2"/><rect x="2.4000000000000004" y="7.500000000000001" width="3.6" height="3.6" rx="1.8" fill="#f2f2f2"/><rect x="7.500000000000001" y="7.500000000000001" width="3.6" height="3.6" rx="1.8" fill="#f2f2f2"/><rect x="12.6" y="7.500000000000001" width="3.6" height="3.6" rx="1.8" fill="#f2f2f2"/><rect x="2.4000000000000004" y="12.6" width="3.6" height="3.6" rx="1.8" fill="#f2f2f2"/><rect x="7.500000000000001" y="12.6" width="3.6" height="3.6" rx="1.8" fill="#f2f2f2"/><circle cx="14.6" cy="14.6" r="3.7" fill="#2fa31a"/><path d="M14.6 12.3v4.6M12.3 14.6h4.6" stroke="#1c3a14" stroke-width="1.1"/></svg><div style="left:11px;top:65px;width:300px;height:224px;background:#282828;border:1px solid #6a6a6a"></div>
<div style="left:12px;top:126px;width:298px;height:3px;background:#5e5e5e;"></div>
<div style="left:12px;top:66px;width:298px;height:222px;overflow:hidden"><svg class="i" style="left:23px;top:66px;" width="14" height="14" viewBox="0 0 14 14"><path d="M0.9 8.6V13.1H13.1V8.6" fill="none" stroke="#f4f4f4" stroke-width="1.8"/><rect x="3.7" y="4.9" width="6.6" height="6.5" fill="#e9a100"/><circle cx="7" cy="8.3" r="1.7" fill="#e9a100" stroke="#3c2a05" stroke-width="1.1"/><path d="M7 0.2L9.5 3.2H8V6H6V3.2H4.5z" fill="#2c9c22"/></svg><span class="t" style="left:40.40px;top:68px;font-size:12.5px;color:#f0f0f0;letter-spacing:-0.363px;-webkit-text-stroke:0.22px;">TransportIn: Any product as ArriveBrakeDisk</span><svg class="i" style="left:275.939209375px;top:66px;" width="16" height="14" viewBox="0 0 16 14"><g fill="none" stroke="#49a5e2" stroke-width="1.2"><path d="M0.6 8.6V2.2Q0.6 0.6 2.2 0.6H11.2"/><rect x="3.6" y="3.2" width="11.8" height="10.2" rx="1"/><path d="M6.4 8.4l2.2 2.2 4-4.6" stroke-width="1.5"/></g></svg><svg class="i" style="left:23px;top:86px;" width="14" height="14" viewBox="0 0 14 14"><path d="M0.9 8.6V13.1H13.1V8.6" fill="none" stroke="#f4f4f4" stroke-width="1.8"/><rect x="3.7" y="4.9" width="6.6" height="6.5" fill="#e9a100"/><circle cx="7" cy="8.3" r="1.7" fill="#e9a100" stroke="#3c2a05" stroke-width="1.1"/><path d="M7 0.2L9.5 3.2H8V6H6V3.2H4.5z" fill="#2c9c22"/></svg><span class="t" style="left:43.30px;top:88px;font-size:12.5px;color:#f0f0f0;letter-spacing:-0.375px;-webkit-text-stroke:0.22px;">TransportOut: ArriveBrakeDisk</span><svg class="i" style="left:282px;top:88.0px;" width="10" height="10" viewBox="0 0 10 10"><circle cx="5" cy="5" r="5" fill="#008200"/></svg></div></div>
</div>
</body></html>
